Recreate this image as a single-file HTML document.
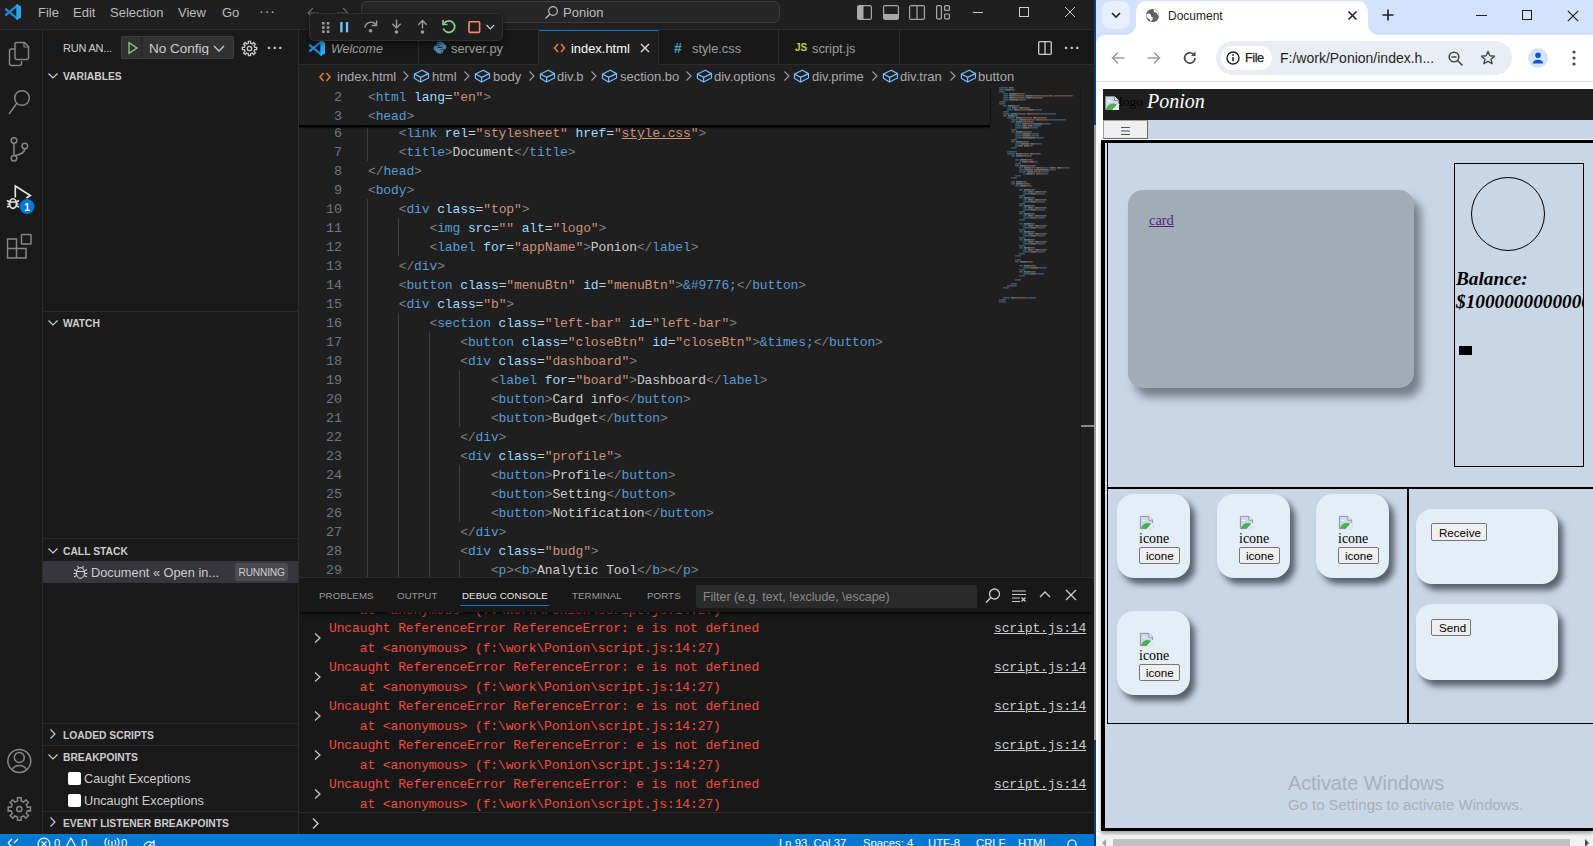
<!DOCTYPE html>
<html><head><meta charset="utf-8">
<style>
*{box-sizing:border-box;margin:0;padding:0}
html,body{width:1593px;height:846px;overflow:hidden;background:#1f1f1f;font-family:"Liberation Sans",sans-serif}
.a{position:absolute}
.t{position:absolute;white-space:pre;line-height:1}
.mono{font-family:"Liberation Mono",monospace}
#vs{position:absolute;left:0;top:0;width:1094px;height:846px;background:#1f1f1f;overflow:hidden}
#title{left:0;top:0;width:1094px;height:30px;background:#1f1f1f;border-bottom:1px solid #2b2b2b}
#act{left:0;top:30px;width:43px;height:804px;background:#1a1a1a;border-right:1px solid #2b2b2b}
#side{left:43px;top:30px;width:256px;height:804px;background:#1a1a1a;border-right:1px solid #2b2b2b}
#status{left:0;top:834px;width:1094px;height:12px;background:#0078d4}
.menu{color:#bbbbbb;font-size:13px;top:6px}
.sh{font-weight:bold;font-size:10.3px;color:#cccccc;margin-top:1px}
.sep{position:absolute;height:1px;background:#2b2b2b}
.code{font-family:"Liberation Mono",monospace;font-size:13px;letter-spacing:-0.12px;color:#cccccc;margin-top:1px}
.b{color:#808080}.tg{color:#569cd6}.at{color:#9cdcfe}.s{color:#ce9178}.w{color:#cccccc}
.ln{position:absolute;left:300px;width:42px;text-align:right;font-family:"Liberation Mono",monospace;font-size:13.4px;color:#6e7681;line-height:19px;margin-top:1px}
.cl{position:absolute;left:368px;white-space:pre;line-height:19px}
.ig{position:absolute;width:1px;background:#404040}
.bct{top:70px;font-size:13px;color:#a9a9a9}
.err{color:#f24b40}
.btn{background:#efefef;border:1px solid #767676;border-radius:2px;color:#000}
.stt{top:4px;font-size:11.3px;color:#ffffff}
.ptab{top:591px;font-size:9.7px;color:#9d9d9d;letter-spacing:0.1px}
#chrome{position:absolute;left:1096px;top:0;width:497px;height:846px;background:#fff;overflow:hidden}
</style></head><body>
<div id="vs">

 <div id="title" class="a">
  <svg class="a" style="left:5px;top:4px" width="16" height="16" viewBox="0 0 16 16"><path d="M1 5.3 12.3 14.6M1 10.9 12.3 1.4" stroke="#1b8ad8" stroke-width="2.3" stroke-linecap="square"/><path d="M11.3.2 16 2.3v11.4L11.3 15.8z" fill="#28a8f0"/></svg>
  <span class="t menu" style="left:38px">File</span>
  <span class="t menu" style="left:73px">Edit</span>
  <span class="t menu" style="left:110px">Selection</span>
  <span class="t menu" style="left:178px">View</span>
  <span class="t menu" style="left:222px">Go</span>
  <span class="t menu" style="left:259px;top:4px;font-size:14px;letter-spacing:1px">&middot;&middot;&middot;</span>
  <svg class="a" style="left:306px;top:5px" width="44" height="16"><path d="M2 8h11M2 8l5-5M2 8l5 5" stroke="#6a6a6a" stroke-width="1.2" fill="none"/><path d="M42 8H31M42 8l-5-5M42 8l-5 5" stroke="#6a6a6a" stroke-width="1.2" fill="none"/></svg>
  <div class="a" style="left:361px;top:1px;width:419px;height:22px;background:#262626;border:1px solid #3c3c3c;border-radius:6px"></div>
  <svg class="a" style="left:544px;top:5px" width="15" height="15"><circle cx="9" cy="6" r="4.3" stroke="#bdbdbd" stroke-width="1.2" fill="none"/><path d="M6 9 1.5 13.5" stroke="#bdbdbd" stroke-width="1.3"/></svg>
  <span class="t" style="left:563px;top:6px;font-size:13px;color:#bdbdbd">Ponion</span>
  <svg class="a" style="left:857px;top:5px" width="15" height="15"><rect x="0.6" y="0.6" width="13.8" height="13.8" rx="1.5" stroke="#a8a8a8" stroke-width="1.2" fill="none"/><rect x="1" y="1" width="5.5" height="13" fill="#a8a8a8"/></svg>
  <svg class="a" style="left:883px;top:5px" width="16" height="15"><rect x="0.6" y="0.6" width="14.8" height="13.8" rx="1.5" stroke="#a8a8a8" stroke-width="1.2" fill="none"/><rect x="1" y="9" width="14" height="5" fill="#a8a8a8"/></svg>
  <svg class="a" style="left:909px;top:5px" width="16" height="15"><rect x="0.6" y="0.6" width="14.8" height="13.8" rx="1.5" stroke="#a8a8a8" stroke-width="1.2" fill="none"/><path d="M8 1v13" stroke="#a8a8a8" stroke-width="1.2"/></svg>
  <svg class="a" style="left:936px;top:5px" width="15" height="15"><rect x="0.6" y="0.6" width="4.8" height="13.3" rx="1" stroke="#a8a8a8" stroke-width="1.2" fill="none"/><rect x="8.6" y="0.6" width="4.8" height="4.8" rx="1" stroke="#a8a8a8" stroke-width="1.2" fill="none"/><rect x="8.6" y="9" width="4.8" height="4.8" rx="1" stroke="#a8a8a8" stroke-width="1.2" fill="none"/></svg>
  <div class="a" style="left:973px;top:12px;width:10px;height:1px;background:#cccccc"></div>
  <div class="a" style="left:1019px;top:7px;width:10px;height:10px;border:1px solid #cccccc"></div>
  <svg class="a" style="left:1064px;top:6px" width="12" height="12"><path d="M1 1l10 10M11 1 1 11" stroke="#cccccc" stroke-width="1"/></svg>
 </div>
 <div class="a" style="z-index:10;left:309px;top:13px;width:194px;height:28px;background:#1f1f1f;border:1px solid #2f2f2f;border-radius:5px;box-shadow:0 2px 6px rgba(0,0,0,.6)">
  <svg class="a" style="left:-1px;top:-1px" width="194" height="28">
   <g fill="#9a9a9a"><rect x="13" y="9" width="2.6" height="2.6"/><rect x="17.8" y="9" width="2.6" height="2.6"/><rect x="13" y="13.2" width="2.6" height="2.6"/><rect x="17.8" y="13.2" width="2.6" height="2.6"/><rect x="13" y="17.4" width="2.6" height="2.6"/><rect x="17.8" y="17.4" width="2.6" height="2.6"/></g>
   <rect x="31.2" y="9" width="2.4" height="10.3" fill="#75beff"/><rect x="36.8" y="9" width="2.4" height="10.3" fill="#75beff"/>
   <path d="M56 14.8a6 6 0 0 1 11.2-2.6" stroke="#9a9a9a" stroke-width="1.4" fill="none"/><path d="M67.6 7.5v5h-5" stroke="#9a9a9a" stroke-width="1.4" fill="none"/><circle cx="61.5" cy="17.8" r="1.8" fill="#9a9a9a"/>
   <path d="M87.5 6.5v8.5M83.3 10.8l4.2 4.2 4.2-4.2" stroke="#9a9a9a" stroke-width="1.4" fill="none"/><circle cx="87.5" cy="19" r="1.8" fill="#9a9a9a"/>
   <path d="M113.5 15.5V7.5M109.3 11.7l4.2-4.2 4.2 4.2" stroke="#9a9a9a" stroke-width="1.4" fill="none"/><circle cx="113.5" cy="19" r="1.8" fill="#9a9a9a"/>
   <path d="M135 10.5a5.8 5.8 0 1 1-.6 5" stroke="#89d185" stroke-width="1.7" fill="none"/><path d="M134 7v4.5h4.5" stroke="#89d185" stroke-width="1.7" fill="none"/>
   <rect x="160" y="8.8" width="10.6" height="10.6" rx="0.8" stroke="#f48771" stroke-width="1.6" fill="none"/>
   <path d="M177.5 12l3.8 3.8 3.8-3.8" stroke="#cccccc" stroke-width="1.2" fill="none"/>
  </svg>
 </div>

 <div id="act" class="a"></div>
 <svg class="a" style="left:0;top:30px" width="42" height="804">
  <g stroke="#858585" stroke-width="1.5" fill="none">
   <path d="M15 19h-3.5a2 2 0 0 0-2 2v12.5a2 2 0 0 0 2 2h8a2 2 0 0 0 2-2V31"/>
   <path d="M16.5 12.5h8l4 4v11.5a1.5 1.5 0 0 1-1.5 1.5h-10.5a1.5 1.5 0 0 1-1.5-1.5V14a1.5 1.5 0 0 1 1.5-1.5z"/><path d="M24 12.5v4.5h4.5" stroke-width="1.2"/>
   <circle cx="22" cy="68" r="7.3"/><path d="M17 73 9 84"/>
   <circle cx="14" cy="110.5" r="2.8"/><circle cx="24.8" cy="116" r="2.8"/><circle cx="14" cy="128.3" r="2.8"/><path d="M14 113.3v12.2M24.8 118.8c0 4-4 5.5-10 7"/>
   <path d="M7.5 209h9v9.5h-9zM16.5 218.5h9.5v9.5h-9.5zM7.5 218.5h9v9.5h-9z"/><rect x="21.5" y="204.5" width="9.5" height="9.5" rx="0.5"/>
  </g>
  <g stroke="#e6e6e6" stroke-width="1.6" fill="none">
   <path d="M15.3 167.5v-11.5l15 9.5-4 2.5"/>
   <ellipse cx="13" cy="173.6" rx="3.4" ry="4.8"/><path d="M9.6 172h6.8M7 170.5l2.3 1.3M19 170.5l-2.3 1.3M7 177l2.5-1M19 177l-2.5-1M7.5 174h2M16.5 174h2"/>
  </g>
  <circle cx="27" cy="176.5" r="7.5" fill="#0078d4"/>
  <text x="27" y="180.5" font-family="Liberation Sans" font-size="10" font-weight="bold" fill="#fff" text-anchor="middle">1</text>
  <g stroke="#858585" stroke-width="1.5" fill="none">
   <circle cx="19.3" cy="731" r="11.5"/><circle cx="19.3" cy="727.5" r="5"/><path d="M12 740a8 7.5 0 0 1 14.6 0"/>
   <path d="M27.41 777.22L30.45 777.14L30.45 780.86L27.41 780.78L26.29 783.47L28.49 785.57L25.87 788.19L23.77 785.99L21.08 787.11L21.16 790.15L17.44 790.15L17.52 787.11L14.83 785.99L12.73 788.19L10.11 785.57L12.31 783.47L11.19 780.78L8.15 780.86L8.15 777.14L11.19 777.22L12.31 774.53L10.11 772.43L12.73 769.81L14.83 772.01L17.52 770.89L17.44 767.85L21.16 767.85L21.08 770.89L23.77 772.01L25.87 769.81L28.49 772.43L26.29 774.53z" stroke-width="1.5"/><circle cx="19.3" cy="779" r="2.6"/>
  </g>
 </svg>

 <div id="side" class="a"></div>
 <span class="t" style="left:63px;top:43px;font-size:11px;color:#cccccc;letter-spacing:-0.2px">RUN AN...</span>
 <div class="a" style="left:121px;top:36px;width:113px;height:23px;background:#313131;border:1px solid #3c3c3c;border-radius:1px"></div>
 <div class="a" style="left:141px;top:37px;width:1px;height:21px;background:#232323"></div>
 <svg class="a" style="left:126px;top:40px" width="14" height="16"><path d="M3 2.8v10.4L11 8z" stroke="#89d185" stroke-width="1.3" fill="none"/></svg>
 <span class="t" style="left:149px;top:41.5px;font-size:13.5px;color:#cccccc;width:60px;overflow:hidden">No Configu</span>
 <svg class="a" style="left:212px;top:41px" width="14" height="14"><path d="M2 5l5 5 5-5" stroke="#cccccc" stroke-width="1.3" fill="none"/></svg>
 <svg class="a" style="left:241px;top:40px" width="17" height="17"><g stroke="#cccccc" stroke-width="1.3" fill="none"><path d="M13.68 7.36L15.70 7.30L15.70 9.70L13.68 9.64L12.96 11.36L14.44 12.74L12.74 14.44L11.36 12.96L9.64 13.68L9.70 15.70L7.30 15.70L7.36 13.68L5.64 12.96L4.26 14.44L2.56 12.74L4.04 11.36L3.32 9.64L1.30 9.70L1.30 7.30L3.32 7.36L4.04 5.64L2.56 4.26L4.26 2.56L5.64 4.04L7.36 3.32L7.30 1.30L9.70 1.30L9.64 3.32L11.36 4.04L12.74 2.56L14.44 4.26L12.96 5.64z"/><circle cx="8.5" cy="8.5" r="2.2"/></g></svg>
 <span class="t" style="left:267px;top:41px;font-size:14px;color:#cccccc;letter-spacing:1px;font-weight:bold">&middot;&middot;&middot;</span>
 <svg class="a" style="left:47px;top:70px" width="12" height="12"><path d="M1.5 3.5l4.5 4.5 4.5-4.5" stroke="#cccccc" stroke-width="1.2" fill="none"/></svg>
 <span class="t sh" style="left:63px;top:71px">VARIABLES</span>
 <div class="sep" style="left:43px;top:311px;width:255px"></div>
 <svg class="a" style="left:47px;top:317px" width="12" height="12"><path d="M1.5 3.5l4.5 4.5 4.5-4.5" stroke="#cccccc" stroke-width="1.2" fill="none"/></svg>
 <span class="t sh" style="left:63px;top:318px">WATCH</span>
 <div class="sep" style="left:43px;top:538px;width:255px"></div>
 <svg class="a" style="left:47px;top:545px" width="12" height="12"><path d="M1.5 3.5l4.5 4.5 4.5-4.5" stroke="#cccccc" stroke-width="1.2" fill="none"/></svg>
 <span class="t sh" style="left:63px;top:546px">CALL STACK</span>
 <div class="a" style="left:43px;top:561px;width:255px;height:22px;background:#36363c"></div>
 <svg class="a" style="left:72px;top:564px" width="17" height="16"><g stroke="#cccccc" stroke-width="1.2" fill="none"><ellipse cx="8.5" cy="9" rx="4" ry="5.3"/><path d="M4.5 7.5h8M2 5.5l2.5 1.5M15 5.5l-2.5 1.5M2 13l2.6-1.5M15 13l-2.6-1.5M1.5 9.5h3M12.5 9.5h3M6.5 3.8l-1-1.8M10.5 3.8l1-1.8"/></g></svg>
 <span class="t" style="left:91px;top:567px;font-size:12.8px;color:#cccccc">Document « Open in...</span>
 <div class="a" style="left:235px;top:563px;width:53px;height:18px;background:#4a4a51;border-radius:3px"></div>
 <span class="t" style="left:238.5px;top:568px;font-size:10.2px;color:#cccccc;letter-spacing:-0.2px">RUNNING</span>
 <div class="sep" style="left:43px;top:723px;width:255px"></div>
 <svg class="a" style="left:47px;top:728px" width="12" height="12"><path d="M3.5 1.5l4.5 4.5-4.5 4.5" stroke="#cccccc" stroke-width="1.2" fill="none"/></svg>
 <span class="t sh" style="left:63px;top:730px">LOADED SCRIPTS</span>
 <div class="sep" style="left:43px;top:745px;width:255px"></div>
 <svg class="a" style="left:47px;top:751px" width="12" height="12"><path d="M1.5 3.5l4.5 4.5 4.5-4.5" stroke="#cccccc" stroke-width="1.2" fill="none"/></svg>
 <span class="t sh" style="left:63px;top:752px">BREAKPOINTS</span>
 <div class="a" style="left:68px;top:772px;width:13px;height:13px;background:#ffffff;border-radius:2px"></div>
 <span class="t" style="left:84px;top:773px;font-size:12.7px;color:#cccccc">Caught Exceptions</span>
 <div class="a" style="left:68px;top:794px;width:13px;height:13px;background:#ffffff;border-radius:2px"></div>
 <span class="t" style="left:84px;top:795px;font-size:12.7px;color:#cccccc">Uncaught Exceptions</span>
 <div class="sep" style="left:43px;top:811px;width:255px"></div>
 <svg class="a" style="left:47px;top:816px" width="12" height="12"><path d="M3.5 1.5l4.5 4.5-4.5 4.5" stroke="#cccccc" stroke-width="1.2" fill="none"/></svg>
 <span class="t sh" style="left:63px;top:818px">EVENT LISTENER BREAKPOINTS</span>

 <div id="tabs" class="a" style="left:299px;top:30px;width:795px;height:35px;background:#181818;border-bottom:1px solid #2b2b2b"></div>
 <div class="a" style="left:299px;top:30px;width:120px;height:34px;border-right:1px solid #2b2b2b"></div>
 <div class="a" style="left:419px;top:30px;width:120px;height:34px;border-right:1px solid #2b2b2b"></div>
 <div class="a" style="left:539px;top:30px;width:120px;height:35px;background:#1f1f1f;border-top:1px solid #0078d4;border-right:1px solid #2b2b2b"></div>
 <div class="a" style="left:659px;top:30px;width:120px;height:34px;border-right:1px solid #2b2b2b"></div>
 <div class="a" style="left:779px;top:30px;width:121px;height:34px;border-right:1px solid #2b2b2b"></div>
 <svg class="a" style="left:309px;top:40px" width="16" height="16" viewBox="0 0 16 16"><path d="M1 5.3 12.3 14.6M1 10.9 12.3 1.4" stroke="#1b8ad8" stroke-width="2.3" stroke-linecap="square"/><path d="M11.3.2 16 2.3v11.4L11.3 15.8z" fill="#28a8f0"/></svg>
 <span class="t" style="left:331px;top:43px;font-size:12.5px;font-style:italic;color:#9d9d9d">Welcome</span>
 <svg class="a" style="left:433px;top:40px" width="14" height="15" viewBox="0 0 16 16"><path fill="#3f7fb5" d="M7.8 1C5 1 4.3 2.1 4.3 3.6v1.6h3.6v.6H3C1.6 5.8.8 7 .8 8.8c0 1.9.9 3 2.3 3h1.3v-1.8c0-1.4 1.1-2.5 2.5-2.5h3.5c1.2 0 2.1-.9 2.1-2.1V3.6C12.5 2.2 11.2 1 7.8 1zM6 2.3c.4 0 .7.3.7.7s-.3.7-.7.7-.7-.3-.7-.7.3-.7.7-.7z"/><path fill="#6aa7d8" d="M8.2 15c2.8 0 3.5-1.1 3.5-2.6v-1.6H8.1v-.6H13c1.4 0 2.2-1.2 2.2-3 0-1.9-.9-3-2.3-3h-1.3V6c0 1.4-1.1 2.5-2.5 2.5H5.6c-1.2 0-2.1.9-2.1 2.1v1.8c0 1.4 1.3 2.6 4.7 2.6zM10 13.7c-.4 0-.7-.3-.7-.7s.3-.7.7-.7.7.3.7.7-.3.7-.7.7z" opacity=".75"/></svg>
 <span class="t" style="left:451px;top:43px;font-size:12.8px;color:#9d9d9d">server.py</span>
 <svg class="a" style="left:553px;top:42px" width="13" height="12"><path d="M5 2 1.5 6 5 10M8 2l3.5 4L8 10" stroke="#e37933" stroke-width="1.6" fill="none"/></svg>
 <span class="t" style="left:571px;top:43px;font-size:12.9px;color:#ffffff">index.html</span>
 <svg class="a" style="left:640px;top:43px" width="10" height="10"><path d="M1 1l8 8M9 1 1 9" stroke="#e0e0e0" stroke-width="1.3"/></svg>
 <span class="t" style="left:674px;top:41px;font-size:14px;font-weight:bold;color:#519aba">#</span>
 <span class="t" style="left:692px;top:43px;font-size:12.8px;color:#9d9d9d">style.css</span>
 <span class="t" style="left:795px;top:43px;font-size:10px;font-weight:bold;color:#cbcb41">JS</span>
 <span class="t" style="left:812px;top:43px;font-size:12.8px;color:#9d9d9d">script.js</span>
 <svg class="a" style="left:1038px;top:41px" width="15" height="14"><rect x="0.7" y="0.7" width="12.6" height="12.6" rx="1" stroke="#cccccc" stroke-width="1.3" fill="none"/><path d="M7 1v12" stroke="#cccccc" stroke-width="1.3"/></svg>
 <span class="t" style="left:1064px;top:41px;font-size:14px;color:#cccccc;letter-spacing:1px;font-weight:bold">&middot;&middot;&middot;</span>
 <svg class="a" style="left:319px;top:71px" width="13" height="12"><path d="M4.5 2 1 6l3.5 4M7.5 2 11 6l-3.5 4" stroke="#e37933" stroke-width="1.5" fill="none"/></svg>
 <span class="t bct" style="left:337px">index.html</span>
 <svg class="a" style="left:402px;top:70px" width="8" height="12"><path d="M1.5 1.5l4.5 4.5-4.5 4.5" stroke="#a0a0a0" stroke-width="1.1" fill="none"/></svg><svg class="a" style="left:413px;top:69px" width="17" height="15"><g stroke="#75beff" stroke-width="1.2" fill="none" stroke-linejoin="round"><path d="M9.3 1.2 1.4 5v4.2l6.1 3.8 8-4V4.6z"/><path d="M1.4 5l6.3 3.4 7.8-3.8M7.6 8.4v4.6"/></g></svg><span class="t bct" style="left:432px">html</span><svg class="a" style="left:463px;top:70px" width="8" height="12"><path d="M1.5 1.5l4.5 4.5-4.5 4.5" stroke="#a0a0a0" stroke-width="1.1" fill="none"/></svg><svg class="a" style="left:474px;top:69px" width="17" height="15"><g stroke="#75beff" stroke-width="1.2" fill="none" stroke-linejoin="round"><path d="M9.3 1.2 1.4 5v4.2l6.1 3.8 8-4V4.6z"/><path d="M1.4 5l6.3 3.4 7.8-3.8M7.6 8.4v4.6"/></g></svg><span class="t bct" style="left:493px">body</span><svg class="a" style="left:528px;top:70px" width="8" height="12"><path d="M1.5 1.5l4.5 4.5-4.5 4.5" stroke="#a0a0a0" stroke-width="1.1" fill="none"/></svg><svg class="a" style="left:539px;top:69px" width="17" height="15"><g stroke="#75beff" stroke-width="1.2" fill="none" stroke-linejoin="round"><path d="M9.3 1.2 1.4 5v4.2l6.1 3.8 8-4V4.6z"/><path d="M1.4 5l6.3 3.4 7.8-3.8M7.6 8.4v4.6"/></g></svg><span class="t bct" style="left:557px">div.b</span><svg class="a" style="left:590px;top:70px" width="8" height="12"><path d="M1.5 1.5l4.5 4.5-4.5 4.5" stroke="#a0a0a0" stroke-width="1.1" fill="none"/></svg><svg class="a" style="left:601px;top:69px" width="17" height="15"><g stroke="#75beff" stroke-width="1.2" fill="none" stroke-linejoin="round"><path d="M9.3 1.2 1.4 5v4.2l6.1 3.8 8-4V4.6z"/><path d="M1.4 5l6.3 3.4 7.8-3.8M7.6 8.4v4.6"/></g></svg><span class="t bct" style="left:620px">section.bo</span><svg class="a" style="left:685px;top:70px" width="8" height="12"><path d="M1.5 1.5l4.5 4.5-4.5 4.5" stroke="#a0a0a0" stroke-width="1.1" fill="none"/></svg><svg class="a" style="left:696px;top:69px" width="17" height="15"><g stroke="#75beff" stroke-width="1.2" fill="none" stroke-linejoin="round"><path d="M9.3 1.2 1.4 5v4.2l6.1 3.8 8-4V4.6z"/><path d="M1.4 5l6.3 3.4 7.8-3.8M7.6 8.4v4.6"/></g></svg><span class="t bct" style="left:714px">div.options</span><svg class="a" style="left:783px;top:70px" width="8" height="12"><path d="M1.5 1.5l4.5 4.5-4.5 4.5" stroke="#a0a0a0" stroke-width="1.1" fill="none"/></svg><svg class="a" style="left:793px;top:69px" width="17" height="15"><g stroke="#75beff" stroke-width="1.2" fill="none" stroke-linejoin="round"><path d="M9.3 1.2 1.4 5v4.2l6.1 3.8 8-4V4.6z"/><path d="M1.4 5l6.3 3.4 7.8-3.8M7.6 8.4v4.6"/></g></svg><span class="t bct" style="left:812px">div.prime</span><svg class="a" style="left:871px;top:70px" width="8" height="12"><path d="M1.5 1.5l4.5 4.5-4.5 4.5" stroke="#a0a0a0" stroke-width="1.1" fill="none"/></svg><svg class="a" style="left:882px;top:69px" width="17" height="15"><g stroke="#75beff" stroke-width="1.2" fill="none" stroke-linejoin="round"><path d="M9.3 1.2 1.4 5v4.2l6.1 3.8 8-4V4.6z"/><path d="M1.4 5l6.3 3.4 7.8-3.8M7.6 8.4v4.6"/></g></svg><span class="t bct" style="left:900px">div.tran</span><svg class="a" style="left:949px;top:70px" width="8" height="12"><path d="M1.5 1.5l4.5 4.5-4.5 4.5" stroke="#a0a0a0" stroke-width="1.1" fill="none"/></svg><svg class="a" style="left:960px;top:69px" width="17" height="15"><g stroke="#75beff" stroke-width="1.2" fill="none" stroke-linejoin="round"><path d="M9.3 1.2 1.4 5v4.2l6.1 3.8 8-4V4.6z"/><path d="M1.4 5l6.3 3.4 7.8-3.8M7.6 8.4v4.6"/></g></svg><span class="t bct" style="left:978px">button</span>
 <!--CODE--><div class="a" style="left:299px;top:87px;width:795px;height:490px;overflow:hidden"><div class="a" style="left:-299px;top:-87px;width:1094px;height:846px"><div class="ig" style="left:367px;top:123px;height:38px;background:#404040"></div><div class="ig" style="left:367px;top:199px;height:380px;background:#404040"></div><div class="ig" style="left:398px;top:218px;height:38px;background:#404040"></div><div class="ig" style="left:398px;top:313px;height:266px;background:#404040"></div><div class="ig" style="left:429px;top:332px;height:247px;background:#404040"></div><div class="ig" style="left:459px;top:370px;height:57px;background:#404040"></div><div class="ig" style="left:459px;top:465px;height:57px;background:#404040"></div><div class="ig" style="left:459px;top:560px;height:19px;background:#404040"></div><div class="ln" style="top:123px">6</div><div class="cl code" style="top:123px">    <span class="b">&lt;</span><span class="tg">link</span> <span class="at">rel</span>=<span class="s">&quot;stylesheet&quot;</span> <span class="at">href</span>=<span class="s">&quot;</span><span class="s" style="text-decoration:underline">style.css</span><span class="s">&quot;</span><span class="b">&gt;</span></div><div class="ln" style="top:142px">7</div><div class="cl code" style="top:142px">    <span class="b">&lt;</span><span class="tg">title</span><span class="b">&gt;</span>Document<span class="b">&lt;/</span><span class="tg">title</span><span class="b">&gt;</span></div><div class="ln" style="top:161px">8</div><div class="cl code" style="top:161px"><span class="b">&lt;/</span><span class="tg">head</span><span class="b">&gt;</span></div><div class="ln" style="top:180px">9</div><div class="cl code" style="top:180px"><span class="b">&lt;</span><span class="tg">body</span><span class="b">&gt;</span></div><div class="ln" style="top:199px">10</div><div class="cl code" style="top:199px">    <span class="b">&lt;</span><span class="tg">div</span> <span class="at">class</span>=<span class="s">&quot;top&quot;</span><span class="b">&gt;</span></div><div class="ln" style="top:218px">11</div><div class="cl code" style="top:218px">        <span class="b">&lt;</span><span class="tg">img</span> <span class="at">src</span>=<span class="s">&quot;&quot;</span> <span class="at">alt</span>=<span class="s">&quot;logo&quot;</span><span class="b">&gt;</span></div><div class="ln" style="top:237px">12</div><div class="cl code" style="top:237px">        <span class="b">&lt;</span><span class="tg">label</span> <span class="at">for</span>=<span class="s">&quot;appName&quot;</span><span class="b">&gt;</span>Ponion<span class="b">&lt;/</span><span class="tg">label</span><span class="b">&gt;</span></div><div class="ln" style="top:256px">13</div><div class="cl code" style="top:256px">    <span class="b">&lt;/</span><span class="tg">div</span><span class="b">&gt;</span></div><div class="ln" style="top:275px">14</div><div class="cl code" style="top:275px">    <span class="b">&lt;</span><span class="tg">button</span> <span class="at">class</span>=<span class="s">&quot;menuBtn&quot;</span> <span class="at">id</span>=<span class="s">&quot;menuBtn&quot;</span><span class="b">&gt;</span><span class="tg">&amp;#9776;</span><span class="b">&lt;/</span><span class="tg">button</span><span class="b">&gt;</span></div><div class="ln" style="top:294px">15</div><div class="cl code" style="top:294px">    <span class="b">&lt;</span><span class="tg">div</span> <span class="at">class</span>=<span class="s">&quot;b&quot;</span><span class="b">&gt;</span></div><div class="ln" style="top:313px">16</div><div class="cl code" style="top:313px">        <span class="b">&lt;</span><span class="tg">section</span> <span class="at">class</span>=<span class="s">&quot;left-bar&quot;</span> <span class="at">id</span>=<span class="s">&quot;left-bar&quot;</span><span class="b">&gt;</span></div><div class="ln" style="top:332px">17</div><div class="cl code" style="top:332px">            <span class="b">&lt;</span><span class="tg">button</span> <span class="at">class</span>=<span class="s">&quot;closeBtn&quot;</span> <span class="at">id</span>=<span class="s">&quot;closeBtn&quot;</span><span class="b">&gt;</span><span class="tg">&amp;times;</span><span class="b">&lt;/</span><span class="tg">button</span><span class="b">&gt;</span></div><div class="ln" style="top:351px">18</div><div class="cl code" style="top:351px">            <span class="b">&lt;</span><span class="tg">div</span> <span class="at">class</span>=<span class="s">&quot;dashboard&quot;</span><span class="b">&gt;</span></div><div class="ln" style="top:370px">19</div><div class="cl code" style="top:370px">                <span class="b">&lt;</span><span class="tg">label</span> <span class="at">for</span>=<span class="s">&quot;board&quot;</span><span class="b">&gt;</span>Dashboard<span class="b">&lt;/</span><span class="tg">label</span><span class="b">&gt;</span></div><div class="ln" style="top:389px">20</div><div class="cl code" style="top:389px">                <span class="b">&lt;</span><span class="tg">button</span><span class="b">&gt;</span>Card info<span class="b">&lt;/</span><span class="tg">button</span><span class="b">&gt;</span></div><div class="ln" style="top:408px">21</div><div class="cl code" style="top:408px">                <span class="b">&lt;</span><span class="tg">button</span><span class="b">&gt;</span>Budget<span class="b">&lt;/</span><span class="tg">button</span><span class="b">&gt;</span></div><div class="ln" style="top:427px">22</div><div class="cl code" style="top:427px">            <span class="b">&lt;/</span><span class="tg">div</span><span class="b">&gt;</span></div><div class="ln" style="top:446px">23</div><div class="cl code" style="top:446px">            <span class="b">&lt;</span><span class="tg">div</span> <span class="at">class</span>=<span class="s">&quot;profile&quot;</span><span class="b">&gt;</span></div><div class="ln" style="top:465px">24</div><div class="cl code" style="top:465px">                <span class="b">&lt;</span><span class="tg">button</span><span class="b">&gt;</span>Profile<span class="b">&lt;/</span><span class="tg">button</span><span class="b">&gt;</span></div><div class="ln" style="top:484px">25</div><div class="cl code" style="top:484px">                <span class="b">&lt;</span><span class="tg">button</span><span class="b">&gt;</span>Setting<span class="b">&lt;/</span><span class="tg">button</span><span class="b">&gt;</span></div><div class="ln" style="top:503px">26</div><div class="cl code" style="top:503px">                <span class="b">&lt;</span><span class="tg">button</span><span class="b">&gt;</span>Notification<span class="b">&lt;/</span><span class="tg">button</span><span class="b">&gt;</span></div><div class="ln" style="top:522px">27</div><div class="cl code" style="top:522px">            <span class="b">&lt;/</span><span class="tg">div</span><span class="b">&gt;</span></div><div class="ln" style="top:541px">28</div><div class="cl code" style="top:541px">            <span class="b">&lt;</span><span class="tg">div</span> <span class="at">class</span>=<span class="s">&quot;budg&quot;</span><span class="b">&gt;</span></div><div class="ln" style="top:560px">29</div><div class="cl code" style="top:560px">                <span class="b">&lt;</span><span class="tg">p</span><span class="b">&gt;</span><span class="b">&lt;</span><span class="tg">b</span><span class="b">&gt;</span>Analytic Tool<span class="b">&lt;/</span><span class="tg">b</span><span class="b">&gt;</span><span class="b">&lt;/</span><span class="tg">p</span><span class="b">&gt;</span></div></div></div><div class="a" style="left:299px;top:87px;width:691px;height:38px;background:#1f1f1f"></div><div class="a" style="left:299px;top:125px;width:691px;height:2px;background:#000"></div><div class="a" style="left:299px;top:127px;width:691px;height:2px;background:linear-gradient(#000a,#0000)"></div><div class="a" style="left:299px;top:87px;width:690px;height:38px;"><div class="a" style="left:-299px;top:-87px;width:1094px;height:100px"><div class="ln" style="top:87px">2</div><div class="cl code" style="top:87px"><span class="b">&lt;</span><span class="tg">html</span> <span class="at">lang</span>=<span class="s">&quot;en&quot;</span><span class="b">&gt;</span></div><div class="ln" style="top:106px">3</div><div class="cl code" style="top:106px"><span class="b">&lt;</span><span class="tg">head</span><span class="b">&gt;</span></div></div></div><!--/CODE--><!--MM--><svg class="a" style="left:999px;top:87px;opacity:.42" width="85" height="216"><rect x="0" y="0" width="2" height="1.6" fill="#808080"/><rect x="2" y="0" width="7" height="1.6" fill="#569cd6"/><rect x="10" y="0" width="4" height="1.6" fill="#9cdcfe"/><rect x="14" y="0" width="1" height="1.6" fill="#808080"/><rect x="0" y="2" width="1" height="1.6" fill="#808080"/><rect x="1" y="2" width="4" height="1.6" fill="#569cd6"/><rect x="6" y="2" width="4" height="1.6" fill="#9cdcfe"/><rect x="10" y="2" width="1" height="1.6" fill="#cccccc"/><rect x="11" y="2" width="4" height="1.6" fill="#ce9178"/><rect x="15" y="2" width="1" height="1.6" fill="#808080"/><rect x="0" y="4" width="1" height="1.6" fill="#808080"/><rect x="1" y="4" width="4" height="1.6" fill="#569cd6"/><rect x="5" y="4" width="1" height="1.6" fill="#808080"/><rect x="4" y="6" width="1" height="1.6" fill="#808080"/><rect x="5" y="6" width="4" height="1.6" fill="#569cd6"/><rect x="10" y="6" width="7" height="1.6" fill="#9cdcfe"/><rect x="17" y="6" width="1" height="1.6" fill="#cccccc"/><rect x="18" y="6" width="7" height="1.6" fill="#ce9178"/><rect x="25" y="6" width="1" height="1.6" fill="#808080"/><rect x="4" y="8" width="1" height="1.6" fill="#808080"/><rect x="5" y="8" width="4" height="1.6" fill="#569cd6"/><rect x="10" y="8" width="4" height="1.6" fill="#9cdcfe"/><rect x="14" y="8" width="1" height="1.6" fill="#cccccc"/><rect x="15" y="8" width="10" height="1.6" fill="#ce9178"/><rect x="26" y="8" width="7" height="1.6" fill="#9cdcfe"/><rect x="33" y="8" width="1" height="1.6" fill="#cccccc"/><rect x="34" y="8" width="20" height="1.6" fill="#ce9178"/><rect x="55" y="8" width="18" height="1.6" fill="#ce9178"/><rect x="73" y="8" width="1" height="1.6" fill="#808080"/><rect x="4" y="10" width="1" height="1.6" fill="#808080"/><rect x="5" y="10" width="4" height="1.6" fill="#569cd6"/><rect x="10" y="10" width="3" height="1.6" fill="#9cdcfe"/><rect x="13" y="10" width="1" height="1.6" fill="#cccccc"/><rect x="14" y="10" width="12" height="1.6" fill="#ce9178"/><rect x="27" y="10" width="4" height="1.6" fill="#9cdcfe"/><rect x="31" y="10" width="1" height="1.6" fill="#cccccc"/><rect x="32" y="10" width="1" height="1.6" fill="#ce9178"/><rect x="33" y="10" width="9" height="1.6" fill="#ce9178"/><rect x="42" y="10" width="1" height="1.6" fill="#ce9178"/><rect x="43" y="10" width="1" height="1.6" fill="#808080"/><rect x="4" y="12" width="1" height="1.6" fill="#808080"/><rect x="5" y="12" width="5" height="1.6" fill="#569cd6"/><rect x="10" y="12" width="1" height="1.6" fill="#808080"/><rect x="11" y="12" width="8" height="1.6" fill="#cccccc"/><rect x="19" y="12" width="2" height="1.6" fill="#808080"/><rect x="21" y="12" width="5" height="1.6" fill="#569cd6"/><rect x="26" y="12" width="1" height="1.6" fill="#808080"/><rect x="0" y="14" width="2" height="1.6" fill="#808080"/><rect x="2" y="14" width="4" height="1.6" fill="#569cd6"/><rect x="6" y="14" width="1" height="1.6" fill="#808080"/><rect x="0" y="16" width="1" height="1.6" fill="#808080"/><rect x="1" y="16" width="4" height="1.6" fill="#569cd6"/><rect x="5" y="16" width="1" height="1.6" fill="#808080"/><rect x="4" y="18" width="1" height="1.6" fill="#808080"/><rect x="5" y="18" width="3" height="1.6" fill="#569cd6"/><rect x="9" y="18" width="5" height="1.6" fill="#9cdcfe"/><rect x="14" y="18" width="1" height="1.6" fill="#cccccc"/><rect x="15" y="18" width="5" height="1.6" fill="#ce9178"/><rect x="20" y="18" width="1" height="1.6" fill="#808080"/><rect x="8" y="20" width="1" height="1.6" fill="#808080"/><rect x="9" y="20" width="3" height="1.6" fill="#569cd6"/><rect x="13" y="20" width="3" height="1.6" fill="#9cdcfe"/><rect x="16" y="20" width="1" height="1.6" fill="#cccccc"/><rect x="17" y="20" width="2" height="1.6" fill="#ce9178"/><rect x="20" y="20" width="3" height="1.6" fill="#9cdcfe"/><rect x="23" y="20" width="1" height="1.6" fill="#cccccc"/><rect x="24" y="20" width="6" height="1.6" fill="#ce9178"/><rect x="30" y="20" width="1" height="1.6" fill="#808080"/><rect x="8" y="22" width="1" height="1.6" fill="#808080"/><rect x="9" y="22" width="5" height="1.6" fill="#569cd6"/><rect x="15" y="22" width="3" height="1.6" fill="#9cdcfe"/><rect x="18" y="22" width="1" height="1.6" fill="#cccccc"/><rect x="19" y="22" width="9" height="1.6" fill="#ce9178"/><rect x="28" y="22" width="1" height="1.6" fill="#808080"/><rect x="29" y="22" width="6" height="1.6" fill="#cccccc"/><rect x="35" y="22" width="2" height="1.6" fill="#808080"/><rect x="37" y="22" width="5" height="1.6" fill="#569cd6"/><rect x="42" y="22" width="1" height="1.6" fill="#808080"/><rect x="4" y="24" width="2" height="1.6" fill="#808080"/><rect x="6" y="24" width="3" height="1.6" fill="#569cd6"/><rect x="9" y="24" width="1" height="1.6" fill="#808080"/><rect x="4" y="26" width="1" height="1.6" fill="#808080"/><rect x="5" y="26" width="6" height="1.6" fill="#569cd6"/><rect x="12" y="26" width="5" height="1.6" fill="#9cdcfe"/><rect x="17" y="26" width="1" height="1.6" fill="#cccccc"/><rect x="18" y="26" width="9" height="1.6" fill="#ce9178"/><rect x="28" y="26" width="2" height="1.6" fill="#9cdcfe"/><rect x="30" y="26" width="1" height="1.6" fill="#cccccc"/><rect x="31" y="26" width="9" height="1.6" fill="#ce9178"/><rect x="40" y="26" width="1" height="1.6" fill="#808080"/><rect x="41" y="26" width="7" height="1.6" fill="#569cd6"/><rect x="48" y="26" width="2" height="1.6" fill="#808080"/><rect x="50" y="26" width="6" height="1.6" fill="#569cd6"/><rect x="56" y="26" width="1" height="1.6" fill="#808080"/><rect x="4" y="28" width="1" height="1.6" fill="#808080"/><rect x="5" y="28" width="3" height="1.6" fill="#569cd6"/><rect x="9" y="28" width="5" height="1.6" fill="#9cdcfe"/><rect x="14" y="28" width="1" height="1.6" fill="#cccccc"/><rect x="15" y="28" width="3" height="1.6" fill="#ce9178"/><rect x="18" y="28" width="1" height="1.6" fill="#808080"/><rect x="8" y="30" width="1" height="1.6" fill="#808080"/><rect x="9" y="30" width="7" height="1.6" fill="#569cd6"/><rect x="17" y="30" width="5" height="1.6" fill="#9cdcfe"/><rect x="22" y="30" width="1" height="1.6" fill="#cccccc"/><rect x="23" y="30" width="10" height="1.6" fill="#ce9178"/><rect x="34" y="30" width="2" height="1.6" fill="#9cdcfe"/><rect x="36" y="30" width="1" height="1.6" fill="#cccccc"/><rect x="37" y="30" width="10" height="1.6" fill="#ce9178"/><rect x="47" y="30" width="1" height="1.6" fill="#808080"/><rect x="12" y="32" width="1" height="1.6" fill="#808080"/><rect x="13" y="32" width="6" height="1.6" fill="#569cd6"/><rect x="20" y="32" width="5" height="1.6" fill="#9cdcfe"/><rect x="25" y="32" width="1" height="1.6" fill="#cccccc"/><rect x="26" y="32" width="10" height="1.6" fill="#ce9178"/><rect x="37" y="32" width="2" height="1.6" fill="#9cdcfe"/><rect x="39" y="32" width="1" height="1.6" fill="#cccccc"/><rect x="40" y="32" width="10" height="1.6" fill="#ce9178"/><rect x="50" y="32" width="1" height="1.6" fill="#808080"/><rect x="51" y="32" width="7" height="1.6" fill="#569cd6"/><rect x="58" y="32" width="2" height="1.6" fill="#808080"/><rect x="60" y="32" width="6" height="1.6" fill="#569cd6"/><rect x="66" y="32" width="1" height="1.6" fill="#808080"/><rect x="12" y="34" width="1" height="1.6" fill="#808080"/><rect x="13" y="34" width="3" height="1.6" fill="#569cd6"/><rect x="17" y="34" width="5" height="1.6" fill="#9cdcfe"/><rect x="22" y="34" width="1" height="1.6" fill="#cccccc"/><rect x="23" y="34" width="11" height="1.6" fill="#ce9178"/><rect x="34" y="34" width="1" height="1.6" fill="#808080"/><rect x="16" y="36" width="1" height="1.6" fill="#808080"/><rect x="17" y="36" width="5" height="1.6" fill="#569cd6"/><rect x="23" y="36" width="3" height="1.6" fill="#9cdcfe"/><rect x="26" y="36" width="1" height="1.6" fill="#cccccc"/><rect x="27" y="36" width="7" height="1.6" fill="#ce9178"/><rect x="34" y="36" width="1" height="1.6" fill="#808080"/><rect x="35" y="36" width="9" height="1.6" fill="#cccccc"/><rect x="44" y="36" width="2" height="1.6" fill="#808080"/><rect x="46" y="36" width="5" height="1.6" fill="#569cd6"/><rect x="51" y="36" width="1" height="1.6" fill="#808080"/><rect x="16" y="38" width="1" height="1.6" fill="#808080"/><rect x="17" y="38" width="6" height="1.6" fill="#569cd6"/><rect x="23" y="38" width="1" height="1.6" fill="#808080"/><rect x="24" y="38" width="4" height="1.6" fill="#cccccc"/><rect x="29" y="38" width="4" height="1.6" fill="#cccccc"/><rect x="33" y="38" width="2" height="1.6" fill="#808080"/><rect x="35" y="38" width="6" height="1.6" fill="#569cd6"/><rect x="41" y="38" width="1" height="1.6" fill="#808080"/><rect x="16" y="40" width="1" height="1.6" fill="#808080"/><rect x="17" y="40" width="6" height="1.6" fill="#569cd6"/><rect x="23" y="40" width="1" height="1.6" fill="#808080"/><rect x="24" y="40" width="6" height="1.6" fill="#cccccc"/><rect x="30" y="40" width="2" height="1.6" fill="#808080"/><rect x="32" y="40" width="6" height="1.6" fill="#569cd6"/><rect x="38" y="40" width="1" height="1.6" fill="#808080"/><rect x="12" y="42" width="2" height="1.6" fill="#808080"/><rect x="14" y="42" width="3" height="1.6" fill="#569cd6"/><rect x="17" y="42" width="1" height="1.6" fill="#808080"/><rect x="12" y="44" width="1" height="1.6" fill="#808080"/><rect x="13" y="44" width="3" height="1.6" fill="#569cd6"/><rect x="17" y="44" width="5" height="1.6" fill="#9cdcfe"/><rect x="22" y="44" width="1" height="1.6" fill="#cccccc"/><rect x="23" y="44" width="9" height="1.6" fill="#ce9178"/><rect x="32" y="44" width="1" height="1.6" fill="#808080"/><rect x="16" y="46" width="1" height="1.6" fill="#808080"/><rect x="17" y="46" width="6" height="1.6" fill="#569cd6"/><rect x="23" y="46" width="1" height="1.6" fill="#808080"/><rect x="24" y="46" width="7" height="1.6" fill="#cccccc"/><rect x="31" y="46" width="2" height="1.6" fill="#808080"/><rect x="33" y="46" width="6" height="1.6" fill="#569cd6"/><rect x="39" y="46" width="1" height="1.6" fill="#808080"/><rect x="16" y="48" width="1" height="1.6" fill="#808080"/><rect x="17" y="48" width="6" height="1.6" fill="#569cd6"/><rect x="23" y="48" width="1" height="1.6" fill="#808080"/><rect x="24" y="48" width="7" height="1.6" fill="#cccccc"/><rect x="31" y="48" width="2" height="1.6" fill="#808080"/><rect x="33" y="48" width="6" height="1.6" fill="#569cd6"/><rect x="39" y="48" width="1" height="1.6" fill="#808080"/><rect x="16" y="50" width="1" height="1.6" fill="#808080"/><rect x="17" y="50" width="6" height="1.6" fill="#569cd6"/><rect x="23" y="50" width="1" height="1.6" fill="#808080"/><rect x="24" y="50" width="12" height="1.6" fill="#cccccc"/><rect x="36" y="50" width="2" height="1.6" fill="#808080"/><rect x="38" y="50" width="6" height="1.6" fill="#569cd6"/><rect x="44" y="50" width="1" height="1.6" fill="#808080"/><rect x="12" y="52" width="2" height="1.6" fill="#808080"/><rect x="14" y="52" width="3" height="1.6" fill="#569cd6"/><rect x="17" y="52" width="1" height="1.6" fill="#808080"/><rect x="12" y="54" width="1" height="1.6" fill="#808080"/><rect x="13" y="54" width="3" height="1.6" fill="#569cd6"/><rect x="17" y="54" width="5" height="1.6" fill="#9cdcfe"/><rect x="22" y="54" width="1" height="1.6" fill="#cccccc"/><rect x="23" y="54" width="6" height="1.6" fill="#ce9178"/><rect x="29" y="54" width="1" height="1.6" fill="#808080"/><rect x="16" y="56" width="1" height="1.6" fill="#808080"/><rect x="17" y="56" width="1" height="1.6" fill="#569cd6"/><rect x="18" y="56" width="1" height="1.6" fill="#808080"/><rect x="19" y="56" width="1" height="1.6" fill="#808080"/><rect x="20" y="56" width="1" height="1.6" fill="#569cd6"/><rect x="21" y="56" width="1" height="1.6" fill="#808080"/><rect x="22" y="56" width="8" height="1.6" fill="#cccccc"/><rect x="31" y="56" width="4" height="1.6" fill="#cccccc"/><rect x="35" y="56" width="2" height="1.6" fill="#808080"/><rect x="37" y="56" width="1" height="1.6" fill="#569cd6"/><rect x="38" y="56" width="1" height="1.6" fill="#808080"/><rect x="39" y="56" width="2" height="1.6" fill="#808080"/><rect x="41" y="56" width="1" height="1.6" fill="#569cd6"/><rect x="42" y="56" width="1" height="1.6" fill="#808080"/><rect x="16" y="58" width="1" height="1.6" fill="#808080"/><rect x="17" y="58" width="1" height="1.6" fill="#569cd6"/><rect x="18" y="58" width="1" height="1.6" fill="#808080"/><rect x="19" y="58" width="5" height="1.6" fill="#cccccc"/><rect x="25" y="58" width="5" height="1.6" fill="#cccccc"/><rect x="30" y="58" width="2" height="1.6" fill="#808080"/><rect x="32" y="58" width="1" height="1.6" fill="#569cd6"/><rect x="33" y="58" width="1" height="1.6" fill="#808080"/><rect x="12" y="60" width="2" height="1.6" fill="#808080"/><rect x="14" y="60" width="3" height="1.6" fill="#569cd6"/><rect x="17" y="60" width="1" height="1.6" fill="#808080"/><rect x="8" y="64" width="2" height="1.6" fill="#808080"/><rect x="10" y="64" width="7" height="1.6" fill="#569cd6"/><rect x="17" y="64" width="1" height="1.6" fill="#808080"/><rect x="8" y="66" width="1" height="1.6" fill="#808080"/><rect x="9" y="66" width="7" height="1.6" fill="#569cd6"/><rect x="17" y="66" width="5" height="1.6" fill="#9cdcfe"/><rect x="22" y="66" width="1" height="1.6" fill="#cccccc"/><rect x="23" y="66" width="7" height="1.6" fill="#ce9178"/><rect x="31" y="66" width="2" height="1.6" fill="#9cdcfe"/><rect x="33" y="66" width="1" height="1.6" fill="#cccccc"/><rect x="34" y="66" width="7" height="1.6" fill="#ce9178"/><rect x="41" y="66" width="1" height="1.6" fill="#808080"/><rect x="12" y="68" width="1" height="1.6" fill="#808080"/><rect x="13" y="68" width="3" height="1.6" fill="#569cd6"/><rect x="17" y="68" width="5" height="1.6" fill="#9cdcfe"/><rect x="22" y="68" width="1" height="1.6" fill="#cccccc"/><rect x="23" y="68" width="9" height="1.6" fill="#ce9178"/><rect x="32" y="68" width="1" height="1.6" fill="#808080"/><rect x="16" y="72" width="1" height="1.6" fill="#808080"/><rect x="17" y="72" width="3" height="1.6" fill="#569cd6"/><rect x="21" y="72" width="5" height="1.6" fill="#9cdcfe"/><rect x="26" y="72" width="1" height="1.6" fill="#cccccc"/><rect x="27" y="72" width="6" height="1.6" fill="#ce9178"/><rect x="33" y="72" width="1" height="1.6" fill="#808080"/><rect x="20" y="74" width="1" height="1.6" fill="#808080"/><rect x="21" y="74" width="1" height="1.6" fill="#569cd6"/><rect x="23" y="74" width="4" height="1.6" fill="#9cdcfe"/><rect x="27" y="74" width="1" height="1.6" fill="#cccccc"/><rect x="28" y="74" width="2" height="1.6" fill="#ce9178"/><rect x="30" y="74" width="1" height="1.6" fill="#808080"/><rect x="31" y="74" width="4" height="1.6" fill="#cccccc"/><rect x="35" y="74" width="2" height="1.6" fill="#808080"/><rect x="37" y="74" width="1" height="1.6" fill="#569cd6"/><rect x="38" y="74" width="1" height="1.6" fill="#808080"/><rect x="16" y="76" width="2" height="1.6" fill="#808080"/><rect x="18" y="76" width="3" height="1.6" fill="#569cd6"/><rect x="21" y="76" width="1" height="1.6" fill="#808080"/><rect x="16" y="78" width="1" height="1.6" fill="#808080"/><rect x="17" y="78" width="3" height="1.6" fill="#569cd6"/><rect x="21" y="78" width="5" height="1.6" fill="#9cdcfe"/><rect x="26" y="78" width="1" height="1.6" fill="#cccccc"/><rect x="27" y="78" width="9" height="1.6" fill="#ce9178"/><rect x="36" y="78" width="1" height="1.6" fill="#808080"/><rect x="20" y="80" width="1" height="1.6" fill="#808080"/><rect x="21" y="80" width="3" height="1.6" fill="#569cd6"/><rect x="25" y="80" width="5" height="1.6" fill="#9cdcfe"/><rect x="30" y="80" width="1" height="1.6" fill="#cccccc"/><rect x="31" y="80" width="5" height="1.6" fill="#ce9178"/><rect x="37" y="80" width="2" height="1.6" fill="#9cdcfe"/><rect x="39" y="80" width="1" height="1.6" fill="#cccccc"/><rect x="40" y="80" width="5" height="1.6" fill="#ce9178"/><rect x="45" y="80" width="1" height="1.6" fill="#808080"/><rect x="46" y="80" width="1" height="1.6" fill="#808080"/><rect x="47" y="80" width="3" height="1.6" fill="#569cd6"/><rect x="51" y="80" width="3" height="1.6" fill="#9cdcfe"/><rect x="54" y="80" width="1" height="1.6" fill="#cccccc"/><rect x="55" y="80" width="2" height="1.6" fill="#ce9178"/><rect x="58" y="80" width="3" height="1.6" fill="#9cdcfe"/><rect x="61" y="80" width="1" height="1.6" fill="#cccccc"/><rect x="62" y="80" width="2" height="1.6" fill="#ce9178"/><rect x="64" y="80" width="1" height="1.6" fill="#808080"/><rect x="65" y="80" width="2" height="1.6" fill="#808080"/><rect x="67" y="80" width="3" height="1.6" fill="#569cd6"/><rect x="70" y="80" width="1" height="1.6" fill="#808080"/><rect x="20" y="82" width="1" height="1.6" fill="#808080"/><rect x="21" y="82" width="1" height="1.6" fill="#569cd6"/><rect x="22" y="82" width="1" height="1.6" fill="#808080"/><rect x="23" y="82" width="1" height="1.6" fill="#808080"/><rect x="24" y="82" width="1" height="1.6" fill="#569cd6"/><rect x="25" y="82" width="1" height="1.6" fill="#808080"/><rect x="26" y="82" width="8" height="1.6" fill="#cccccc"/><rect x="35" y="82" width="14" height="1.6" fill="#cccccc"/><rect x="49" y="82" width="2" height="1.6" fill="#808080"/><rect x="51" y="82" width="1" height="1.6" fill="#569cd6"/><rect x="52" y="82" width="1" height="1.6" fill="#808080"/><rect x="53" y="82" width="2" height="1.6" fill="#808080"/><rect x="55" y="82" width="1" height="1.6" fill="#569cd6"/><rect x="56" y="82" width="1" height="1.6" fill="#808080"/><rect x="20" y="84" width="1" height="1.6" fill="#808080"/><rect x="21" y="84" width="6" height="1.6" fill="#569cd6"/><rect x="28" y="84" width="5" height="1.6" fill="#9cdcfe"/><rect x="33" y="84" width="1" height="1.6" fill="#cccccc"/><rect x="34" y="84" width="5" height="1.6" fill="#ce9178"/><rect x="39" y="84" width="1" height="1.6" fill="#808080"/><rect x="40" y="84" width="1" height="1.6" fill="#cccccc"/><rect x="41" y="84" width="2" height="1.6" fill="#808080"/><rect x="43" y="84" width="6" height="1.6" fill="#569cd6"/><rect x="49" y="84" width="1" height="1.6" fill="#808080"/><rect x="24" y="86" width="1" height="1.6" fill="#808080"/><rect x="25" y="86" width="1" height="1.6" fill="#569cd6"/><rect x="27" y="86" width="5" height="1.6" fill="#9cdcfe"/><rect x="32" y="86" width="1" height="1.6" fill="#cccccc"/><rect x="33" y="86" width="3" height="1.6" fill="#ce9178"/><rect x="37" y="86" width="7" height="1.6" fill="#ce9178"/><rect x="44" y="86" width="1" height="1.6" fill="#808080"/><rect x="45" y="86" width="2" height="1.6" fill="#808080"/><rect x="47" y="86" width="1" height="1.6" fill="#569cd6"/><rect x="48" y="86" width="1" height="1.6" fill="#808080"/><rect x="16" y="88" width="2" height="1.6" fill="#808080"/><rect x="18" y="88" width="3" height="1.6" fill="#569cd6"/><rect x="21" y="88" width="1" height="1.6" fill="#808080"/><rect x="12" y="90" width="2" height="1.6" fill="#808080"/><rect x="14" y="90" width="3" height="1.6" fill="#569cd6"/><rect x="17" y="90" width="1" height="1.6" fill="#808080"/><rect x="12" y="94" width="1" height="1.6" fill="#808080"/><rect x="13" y="94" width="3" height="1.6" fill="#569cd6"/><rect x="17" y="94" width="5" height="1.6" fill="#9cdcfe"/><rect x="22" y="94" width="1" height="1.6" fill="#cccccc"/><rect x="23" y="94" width="4" height="1.6" fill="#ce9178"/><rect x="27" y="94" width="1" height="1.6" fill="#808080"/><rect x="12" y="96" width="1" height="1.6" fill="#808080"/><rect x="13" y="96" width="3" height="1.6" fill="#569cd6"/><rect x="17" y="96" width="5" height="1.6" fill="#9cdcfe"/><rect x="22" y="96" width="1" height="1.6" fill="#cccccc"/><rect x="23" y="96" width="7" height="1.6" fill="#ce9178"/><rect x="30" y="96" width="1" height="1.6" fill="#808080"/><rect x="16" y="98" width="1" height="1.6" fill="#808080"/><rect x="17" y="98" width="3" height="1.6" fill="#569cd6"/><rect x="21" y="98" width="5" height="1.6" fill="#9cdcfe"/><rect x="26" y="98" width="1" height="1.6" fill="#cccccc"/><rect x="27" y="98" width="5" height="1.6" fill="#ce9178"/><rect x="32" y="98" width="1" height="1.6" fill="#808080"/><rect x="20" y="102" width="1" height="1.6" fill="#808080"/><rect x="21" y="102" width="3" height="1.6" fill="#569cd6"/><rect x="25" y="102" width="5" height="1.6" fill="#9cdcfe"/><rect x="30" y="102" width="1" height="1.6" fill="#cccccc"/><rect x="31" y="102" width="4" height="1.6" fill="#ce9178"/><rect x="35" y="102" width="1" height="1.6" fill="#808080"/><rect x="24" y="104" width="1" height="1.6" fill="#808080"/><rect x="25" y="104" width="3" height="1.6" fill="#569cd6"/><rect x="29" y="104" width="3" height="1.6" fill="#9cdcfe"/><rect x="32" y="104" width="1" height="1.6" fill="#cccccc"/><rect x="33" y="104" width="2" height="1.6" fill="#ce9178"/><rect x="36" y="104" width="3" height="1.6" fill="#9cdcfe"/><rect x="39" y="104" width="1" height="1.6" fill="#cccccc"/><rect x="40" y="104" width="7" height="1.6" fill="#ce9178"/><rect x="47" y="104" width="1" height="1.6" fill="#808080"/><rect x="24" y="106" width="1" height="1.6" fill="#808080"/><rect x="25" y="106" width="6" height="1.6" fill="#569cd6"/><rect x="31" y="106" width="1" height="1.6" fill="#808080"/><rect x="32" y="106" width="5" height="1.6" fill="#cccccc"/><rect x="37" y="106" width="2" height="1.6" fill="#808080"/><rect x="39" y="106" width="6" height="1.6" fill="#569cd6"/><rect x="45" y="106" width="1" height="1.6" fill="#808080"/><rect x="20" y="108" width="2" height="1.6" fill="#808080"/><rect x="22" y="108" width="3" height="1.6" fill="#569cd6"/><rect x="25" y="108" width="1" height="1.6" fill="#808080"/><rect x="20" y="110" width="1" height="1.6" fill="#808080"/><rect x="21" y="110" width="3" height="1.6" fill="#569cd6"/><rect x="25" y="110" width="5" height="1.6" fill="#9cdcfe"/><rect x="30" y="110" width="1" height="1.6" fill="#cccccc"/><rect x="31" y="110" width="4" height="1.6" fill="#ce9178"/><rect x="35" y="110" width="1" height="1.6" fill="#808080"/><rect x="24" y="112" width="1" height="1.6" fill="#808080"/><rect x="25" y="112" width="3" height="1.6" fill="#569cd6"/><rect x="29" y="112" width="3" height="1.6" fill="#9cdcfe"/><rect x="32" y="112" width="1" height="1.6" fill="#cccccc"/><rect x="33" y="112" width="2" height="1.6" fill="#ce9178"/><rect x="36" y="112" width="3" height="1.6" fill="#9cdcfe"/><rect x="39" y="112" width="1" height="1.6" fill="#cccccc"/><rect x="40" y="112" width="7" height="1.6" fill="#ce9178"/><rect x="47" y="112" width="1" height="1.6" fill="#808080"/><rect x="24" y="114" width="1" height="1.6" fill="#808080"/><rect x="25" y="114" width="6" height="1.6" fill="#569cd6"/><rect x="31" y="114" width="1" height="1.6" fill="#808080"/><rect x="32" y="114" width="5" height="1.6" fill="#cccccc"/><rect x="37" y="114" width="2" height="1.6" fill="#808080"/><rect x="39" y="114" width="6" height="1.6" fill="#569cd6"/><rect x="45" y="114" width="1" height="1.6" fill="#808080"/><rect x="20" y="116" width="2" height="1.6" fill="#808080"/><rect x="22" y="116" width="3" height="1.6" fill="#569cd6"/><rect x="25" y="116" width="1" height="1.6" fill="#808080"/><rect x="20" y="118" width="1" height="1.6" fill="#808080"/><rect x="21" y="118" width="3" height="1.6" fill="#569cd6"/><rect x="25" y="118" width="5" height="1.6" fill="#9cdcfe"/><rect x="30" y="118" width="1" height="1.6" fill="#cccccc"/><rect x="31" y="118" width="4" height="1.6" fill="#ce9178"/><rect x="35" y="118" width="1" height="1.6" fill="#808080"/><rect x="24" y="120" width="1" height="1.6" fill="#808080"/><rect x="25" y="120" width="3" height="1.6" fill="#569cd6"/><rect x="29" y="120" width="3" height="1.6" fill="#9cdcfe"/><rect x="32" y="120" width="1" height="1.6" fill="#cccccc"/><rect x="33" y="120" width="2" height="1.6" fill="#ce9178"/><rect x="36" y="120" width="3" height="1.6" fill="#9cdcfe"/><rect x="39" y="120" width="1" height="1.6" fill="#cccccc"/><rect x="40" y="120" width="7" height="1.6" fill="#ce9178"/><rect x="47" y="120" width="1" height="1.6" fill="#808080"/><rect x="24" y="122" width="1" height="1.6" fill="#808080"/><rect x="25" y="122" width="6" height="1.6" fill="#569cd6"/><rect x="31" y="122" width="1" height="1.6" fill="#808080"/><rect x="32" y="122" width="5" height="1.6" fill="#cccccc"/><rect x="37" y="122" width="2" height="1.6" fill="#808080"/><rect x="39" y="122" width="6" height="1.6" fill="#569cd6"/><rect x="45" y="122" width="1" height="1.6" fill="#808080"/><rect x="20" y="124" width="2" height="1.6" fill="#808080"/><rect x="22" y="124" width="3" height="1.6" fill="#569cd6"/><rect x="25" y="124" width="1" height="1.6" fill="#808080"/><rect x="20" y="126" width="1" height="1.6" fill="#808080"/><rect x="21" y="126" width="3" height="1.6" fill="#569cd6"/><rect x="25" y="126" width="5" height="1.6" fill="#9cdcfe"/><rect x="30" y="126" width="1" height="1.6" fill="#cccccc"/><rect x="31" y="126" width="4" height="1.6" fill="#ce9178"/><rect x="35" y="126" width="1" height="1.6" fill="#808080"/><rect x="24" y="128" width="1" height="1.6" fill="#808080"/><rect x="25" y="128" width="3" height="1.6" fill="#569cd6"/><rect x="29" y="128" width="3" height="1.6" fill="#9cdcfe"/><rect x="32" y="128" width="1" height="1.6" fill="#cccccc"/><rect x="33" y="128" width="2" height="1.6" fill="#ce9178"/><rect x="36" y="128" width="3" height="1.6" fill="#9cdcfe"/><rect x="39" y="128" width="1" height="1.6" fill="#cccccc"/><rect x="40" y="128" width="7" height="1.6" fill="#ce9178"/><rect x="47" y="128" width="1" height="1.6" fill="#808080"/><rect x="24" y="130" width="1" height="1.6" fill="#808080"/><rect x="25" y="130" width="6" height="1.6" fill="#569cd6"/><rect x="31" y="130" width="1" height="1.6" fill="#808080"/><rect x="32" y="130" width="5" height="1.6" fill="#cccccc"/><rect x="37" y="130" width="2" height="1.6" fill="#808080"/><rect x="39" y="130" width="6" height="1.6" fill="#569cd6"/><rect x="45" y="130" width="1" height="1.6" fill="#808080"/><rect x="20" y="132" width="2" height="1.6" fill="#808080"/><rect x="22" y="132" width="3" height="1.6" fill="#569cd6"/><rect x="25" y="132" width="1" height="1.6" fill="#808080"/><rect x="20" y="136" width="1" height="1.6" fill="#808080"/><rect x="21" y="136" width="3" height="1.6" fill="#569cd6"/><rect x="25" y="136" width="5" height="1.6" fill="#9cdcfe"/><rect x="30" y="136" width="1" height="1.6" fill="#cccccc"/><rect x="31" y="136" width="4" height="1.6" fill="#ce9178"/><rect x="35" y="136" width="1" height="1.6" fill="#808080"/><rect x="24" y="138" width="1" height="1.6" fill="#808080"/><rect x="25" y="138" width="3" height="1.6" fill="#569cd6"/><rect x="29" y="138" width="3" height="1.6" fill="#9cdcfe"/><rect x="32" y="138" width="1" height="1.6" fill="#cccccc"/><rect x="33" y="138" width="2" height="1.6" fill="#ce9178"/><rect x="36" y="138" width="3" height="1.6" fill="#9cdcfe"/><rect x="39" y="138" width="1" height="1.6" fill="#cccccc"/><rect x="40" y="138" width="7" height="1.6" fill="#ce9178"/><rect x="47" y="138" width="1" height="1.6" fill="#808080"/><rect x="24" y="140" width="1" height="1.6" fill="#808080"/><rect x="25" y="140" width="6" height="1.6" fill="#569cd6"/><rect x="31" y="140" width="1" height="1.6" fill="#808080"/><rect x="32" y="140" width="5" height="1.6" fill="#cccccc"/><rect x="37" y="140" width="2" height="1.6" fill="#808080"/><rect x="39" y="140" width="6" height="1.6" fill="#569cd6"/><rect x="45" y="140" width="1" height="1.6" fill="#808080"/><rect x="20" y="142" width="2" height="1.6" fill="#808080"/><rect x="22" y="142" width="3" height="1.6" fill="#569cd6"/><rect x="25" y="142" width="1" height="1.6" fill="#808080"/><rect x="20" y="144" width="1" height="1.6" fill="#808080"/><rect x="21" y="144" width="3" height="1.6" fill="#569cd6"/><rect x="25" y="144" width="5" height="1.6" fill="#9cdcfe"/><rect x="30" y="144" width="1" height="1.6" fill="#cccccc"/><rect x="31" y="144" width="4" height="1.6" fill="#ce9178"/><rect x="35" y="144" width="1" height="1.6" fill="#808080"/><rect x="24" y="146" width="1" height="1.6" fill="#808080"/><rect x="25" y="146" width="3" height="1.6" fill="#569cd6"/><rect x="29" y="146" width="3" height="1.6" fill="#9cdcfe"/><rect x="32" y="146" width="1" height="1.6" fill="#cccccc"/><rect x="33" y="146" width="2" height="1.6" fill="#ce9178"/><rect x="36" y="146" width="3" height="1.6" fill="#9cdcfe"/><rect x="39" y="146" width="1" height="1.6" fill="#cccccc"/><rect x="40" y="146" width="7" height="1.6" fill="#ce9178"/><rect x="47" y="146" width="1" height="1.6" fill="#808080"/><rect x="24" y="148" width="1" height="1.6" fill="#808080"/><rect x="25" y="148" width="6" height="1.6" fill="#569cd6"/><rect x="31" y="148" width="1" height="1.6" fill="#808080"/><rect x="32" y="148" width="5" height="1.6" fill="#cccccc"/><rect x="37" y="148" width="2" height="1.6" fill="#808080"/><rect x="39" y="148" width="6" height="1.6" fill="#569cd6"/><rect x="45" y="148" width="1" height="1.6" fill="#808080"/><rect x="20" y="150" width="2" height="1.6" fill="#808080"/><rect x="22" y="150" width="3" height="1.6" fill="#569cd6"/><rect x="25" y="150" width="1" height="1.6" fill="#808080"/><rect x="20" y="152" width="1" height="1.6" fill="#808080"/><rect x="21" y="152" width="3" height="1.6" fill="#569cd6"/><rect x="25" y="152" width="5" height="1.6" fill="#9cdcfe"/><rect x="30" y="152" width="1" height="1.6" fill="#cccccc"/><rect x="31" y="152" width="4" height="1.6" fill="#ce9178"/><rect x="35" y="152" width="1" height="1.6" fill="#808080"/><rect x="24" y="154" width="1" height="1.6" fill="#808080"/><rect x="25" y="154" width="3" height="1.6" fill="#569cd6"/><rect x="29" y="154" width="3" height="1.6" fill="#9cdcfe"/><rect x="32" y="154" width="1" height="1.6" fill="#cccccc"/><rect x="33" y="154" width="2" height="1.6" fill="#ce9178"/><rect x="36" y="154" width="3" height="1.6" fill="#9cdcfe"/><rect x="39" y="154" width="1" height="1.6" fill="#cccccc"/><rect x="40" y="154" width="7" height="1.6" fill="#ce9178"/><rect x="47" y="154" width="1" height="1.6" fill="#808080"/><rect x="24" y="156" width="1" height="1.6" fill="#808080"/><rect x="25" y="156" width="6" height="1.6" fill="#569cd6"/><rect x="31" y="156" width="1" height="1.6" fill="#808080"/><rect x="32" y="156" width="5" height="1.6" fill="#cccccc"/><rect x="37" y="156" width="2" height="1.6" fill="#808080"/><rect x="39" y="156" width="6" height="1.6" fill="#569cd6"/><rect x="45" y="156" width="1" height="1.6" fill="#808080"/><rect x="20" y="158" width="2" height="1.6" fill="#808080"/><rect x="22" y="158" width="3" height="1.6" fill="#569cd6"/><rect x="25" y="158" width="1" height="1.6" fill="#808080"/><rect x="20" y="160" width="1" height="1.6" fill="#808080"/><rect x="21" y="160" width="3" height="1.6" fill="#569cd6"/><rect x="25" y="160" width="5" height="1.6" fill="#9cdcfe"/><rect x="30" y="160" width="1" height="1.6" fill="#cccccc"/><rect x="31" y="160" width="4" height="1.6" fill="#ce9178"/><rect x="35" y="160" width="1" height="1.6" fill="#808080"/><rect x="24" y="162" width="1" height="1.6" fill="#808080"/><rect x="25" y="162" width="3" height="1.6" fill="#569cd6"/><rect x="29" y="162" width="3" height="1.6" fill="#9cdcfe"/><rect x="32" y="162" width="1" height="1.6" fill="#cccccc"/><rect x="33" y="162" width="2" height="1.6" fill="#ce9178"/><rect x="36" y="162" width="3" height="1.6" fill="#9cdcfe"/><rect x="39" y="162" width="1" height="1.6" fill="#cccccc"/><rect x="40" y="162" width="7" height="1.6" fill="#ce9178"/><rect x="47" y="162" width="1" height="1.6" fill="#808080"/><rect x="24" y="164" width="1" height="1.6" fill="#808080"/><rect x="25" y="164" width="6" height="1.6" fill="#569cd6"/><rect x="31" y="164" width="1" height="1.6" fill="#808080"/><rect x="32" y="164" width="5" height="1.6" fill="#cccccc"/><rect x="37" y="164" width="2" height="1.6" fill="#808080"/><rect x="39" y="164" width="6" height="1.6" fill="#569cd6"/><rect x="45" y="164" width="1" height="1.6" fill="#808080"/><rect x="20" y="166" width="2" height="1.6" fill="#808080"/><rect x="22" y="166" width="3" height="1.6" fill="#569cd6"/><rect x="25" y="166" width="1" height="1.6" fill="#808080"/><rect x="16" y="168" width="2" height="1.6" fill="#808080"/><rect x="18" y="168" width="3" height="1.6" fill="#569cd6"/><rect x="21" y="168" width="1" height="1.6" fill="#808080"/><rect x="16" y="172" width="2" height="1.6" fill="#808080"/><rect x="18" y="172" width="3" height="1.6" fill="#569cd6"/><rect x="21" y="172" width="1" height="1.6" fill="#808080"/><rect x="16" y="174" width="1" height="1.6" fill="#808080"/><rect x="17" y="174" width="3" height="1.6" fill="#569cd6"/><rect x="21" y="174" width="5" height="1.6" fill="#9cdcfe"/><rect x="26" y="174" width="1" height="1.6" fill="#cccccc"/><rect x="27" y="174" width="6" height="1.6" fill="#ce9178"/><rect x="33" y="174" width="1" height="1.6" fill="#808080"/><rect x="20" y="178" width="1" height="1.6" fill="#808080"/><rect x="21" y="178" width="3" height="1.6" fill="#569cd6"/><rect x="25" y="178" width="5" height="1.6" fill="#9cdcfe"/><rect x="30" y="178" width="1" height="1.6" fill="#cccccc"/><rect x="31" y="178" width="5" height="1.6" fill="#ce9178"/><rect x="36" y="178" width="1" height="1.6" fill="#808080"/><rect x="24" y="180" width="1" height="1.6" fill="#808080"/><rect x="25" y="180" width="6" height="1.6" fill="#569cd6"/><rect x="31" y="180" width="1" height="1.6" fill="#808080"/><rect x="32" y="180" width="7" height="1.6" fill="#cccccc"/><rect x="39" y="180" width="2" height="1.6" fill="#808080"/><rect x="41" y="180" width="6" height="1.6" fill="#569cd6"/><rect x="47" y="180" width="1" height="1.6" fill="#808080"/><rect x="20" y="182" width="2" height="1.6" fill="#808080"/><rect x="22" y="182" width="3" height="1.6" fill="#569cd6"/><rect x="25" y="182" width="1" height="1.6" fill="#808080"/><rect x="20" y="184" width="1" height="1.6" fill="#808080"/><rect x="21" y="184" width="3" height="1.6" fill="#569cd6"/><rect x="25" y="184" width="5" height="1.6" fill="#9cdcfe"/><rect x="30" y="184" width="1" height="1.6" fill="#cccccc"/><rect x="31" y="184" width="5" height="1.6" fill="#ce9178"/><rect x="36" y="184" width="1" height="1.6" fill="#808080"/><rect x="24" y="186" width="1" height="1.6" fill="#808080"/><rect x="25" y="186" width="6" height="1.6" fill="#569cd6"/><rect x="31" y="186" width="1" height="1.6" fill="#808080"/><rect x="32" y="186" width="4" height="1.6" fill="#cccccc"/><rect x="36" y="186" width="2" height="1.6" fill="#808080"/><rect x="38" y="186" width="6" height="1.6" fill="#569cd6"/><rect x="44" y="186" width="1" height="1.6" fill="#808080"/><rect x="20" y="188" width="2" height="1.6" fill="#808080"/><rect x="22" y="188" width="3" height="1.6" fill="#569cd6"/><rect x="25" y="188" width="1" height="1.6" fill="#808080"/><rect x="16" y="192" width="2" height="1.6" fill="#808080"/><rect x="18" y="192" width="3" height="1.6" fill="#569cd6"/><rect x="21" y="192" width="1" height="1.6" fill="#808080"/><rect x="12" y="196" width="2" height="1.6" fill="#808080"/><rect x="14" y="196" width="3" height="1.6" fill="#569cd6"/><rect x="17" y="196" width="1" height="1.6" fill="#808080"/><rect x="8" y="198" width="2" height="1.6" fill="#808080"/><rect x="10" y="198" width="7" height="1.6" fill="#569cd6"/><rect x="17" y="198" width="1" height="1.6" fill="#808080"/><rect x="4" y="200" width="2" height="1.6" fill="#808080"/><rect x="6" y="200" width="3" height="1.6" fill="#569cd6"/><rect x="9" y="200" width="1" height="1.6" fill="#808080"/><rect x="4" y="210" width="1" height="1.6" fill="#808080"/><rect x="5" y="210" width="6" height="1.6" fill="#569cd6"/><rect x="12" y="210" width="3" height="1.6" fill="#9cdcfe"/><rect x="15" y="210" width="1" height="1.6" fill="#cccccc"/><rect x="16" y="210" width="11" height="1.6" fill="#ce9178"/><rect x="27" y="210" width="1" height="1.6" fill="#808080"/><rect x="28" y="210" width="2" height="1.6" fill="#808080"/><rect x="30" y="210" width="6" height="1.6" fill="#569cd6"/><rect x="36" y="210" width="1" height="1.6" fill="#808080"/><rect x="0" y="212" width="2" height="1.6" fill="#808080"/><rect x="2" y="212" width="4" height="1.6" fill="#569cd6"/><rect x="6" y="212" width="1" height="1.6" fill="#808080"/><rect x="0" y="214" width="2" height="1.6" fill="#808080"/><rect x="2" y="214" width="4" height="1.6" fill="#569cd6"/><rect x="6" y="214" width="1" height="1.6" fill="#808080"/></svg><div class="a" style="left:1080px;top:87px;width:1px;height:490px;background:#171717"></div><div class="a" style="left:1081px;top:425px;width:13px;height:2px;background:#8a8a8a"></div><div class="a" style="left:990px;top:87px;width:1px;height:38px;background:#141414"></div><!--/MM--><!--PANEL-->
 <div class="a" style="left:299px;top:577px;width:795px;height:257px;background:#181818;border-top:1px solid #2b2b2b"></div>
 <div class="a" style="left:299px;top:578px;width:795px;height:235px;overflow:hidden"><div class="a" style="left:-299px;top:-578px;width:1094px;height:846px">
  <div class="cl code err" style="left:329px;top:600px">    at &lt;anonymous&gt; (f:\work\Ponion\script.js:14:27)</div>
  <div class="cl code err" style="left:329px;top:618.0px">Uncaught ReferenceError ReferenceError: e is not defined</div><div class="cl code err" style="left:329px;top:638.0px">    at &lt;anonymous&gt; (f:\work\Ponion\script.js:14:27)</div><div class="cl code" style="left:994px;top:618.0px;color:#cccccc;text-decoration:underline">script.js:14</div><svg class="a" style="left:313px;top:631.5px" width="10" height="12"><path d="M2 1.5l5 4.5-5 4.5" stroke="#cccccc" stroke-width="1.2" fill="none"/></svg><div class="cl code err" style="left:329px;top:657.0px">Uncaught ReferenceError ReferenceError: e is not defined</div><div class="cl code err" style="left:329px;top:677.0px">    at &lt;anonymous&gt; (f:\work\Ponion\script.js:14:27)</div><div class="cl code" style="left:994px;top:657.0px;color:#cccccc;text-decoration:underline">script.js:14</div><svg class="a" style="left:313px;top:670.5px" width="10" height="12"><path d="M2 1.5l5 4.5-5 4.5" stroke="#cccccc" stroke-width="1.2" fill="none"/></svg><div class="cl code err" style="left:329px;top:696.0px">Uncaught ReferenceError ReferenceError: e is not defined</div><div class="cl code err" style="left:329px;top:716.0px">    at &lt;anonymous&gt; (f:\work\Ponion\script.js:14:27)</div><div class="cl code" style="left:994px;top:696.0px;color:#cccccc;text-decoration:underline">script.js:14</div><svg class="a" style="left:313px;top:709.5px" width="10" height="12"><path d="M2 1.5l5 4.5-5 4.5" stroke="#cccccc" stroke-width="1.2" fill="none"/></svg><div class="cl code err" style="left:329px;top:735.0px">Uncaught ReferenceError ReferenceError: e is not defined</div><div class="cl code err" style="left:329px;top:755.0px">    at &lt;anonymous&gt; (f:\work\Ponion\script.js:14:27)</div><div class="cl code" style="left:994px;top:735.0px;color:#cccccc;text-decoration:underline">script.js:14</div><svg class="a" style="left:313px;top:748.5px" width="10" height="12"><path d="M2 1.5l5 4.5-5 4.5" stroke="#cccccc" stroke-width="1.2" fill="none"/></svg><div class="cl code err" style="left:329px;top:774.0px">Uncaught ReferenceError ReferenceError: e is not defined</div><div class="cl code err" style="left:329px;top:794.0px">    at &lt;anonymous&gt; (f:\work\Ponion\script.js:14:27)</div><div class="cl code" style="left:994px;top:774.0px;color:#cccccc;text-decoration:underline">script.js:14</div><svg class="a" style="left:313px;top:787.5px" width="10" height="12"><path d="M2 1.5l5 4.5-5 4.5" stroke="#cccccc" stroke-width="1.2" fill="none"/></svg>
 </div></div>
 <div class="a" style="left:299px;top:578px;width:795px;height:34px;background:#181818;box-shadow:0 3px 4px -2px #000"></div>
 <span class="t ptab" style="left:319px">PROBLEMS</span>
 <span class="t ptab" style="left:397px">OUTPUT</span>
 <span class="t ptab" style="left:462px;color:#e7e7e7">DEBUG CONSOLE</span>
 <div class="a" style="left:460px;top:605px;width:89px;height:1px;background:#0078d4"></div>
 <span class="t ptab" style="left:572px">TERMINAL</span>
 <span class="t ptab" style="left:647px">PORTS</span>
 <div class="a" style="left:696px;top:585px;width:281px;height:23px;background:#2a2a2a;border-radius:2px"></div>
 <span class="t" style="left:703px;top:591px;font-size:12.4px;color:#8b8b8b">Filter (e.g. text, !exclude, \escape)</span>
 <svg class="a" style="left:984px;top:587px" width="18" height="18"><circle cx="10.5" cy="7" r="5" stroke="#cccccc" stroke-width="1.3" fill="none"/><path d="M7 10.5 2 15.5" stroke="#cccccc" stroke-width="1.5"/></svg>
 <svg class="a" style="left:1011px;top:589px" width="17" height="14"><path d="M1 2h14M1 5.5h14M1 9h8M1 12.5h8" stroke="#cccccc" stroke-width="1.2"/><path d="M10.5 8.5l4 4M14.5 8.5l-4 4" stroke="#cccccc" stroke-width="1.2"/></svg>
 <svg class="a" style="left:1039px;top:590px" width="12" height="10"><path d="M1 7l5-5 5 5" stroke="#cccccc" stroke-width="1.3" fill="none"/></svg>
 <svg class="a" style="left:1065px;top:589px" width="12" height="12"><path d="M1 1l10 10M11 1 1 11" stroke="#cccccc" stroke-width="1.3"/></svg>
 <div class="a" style="left:299px;top:812px;width:795px;height:1px;background:#2b2b2b"></div>
 <svg class="a" style="left:311px;top:817px" width="10" height="13"><path d="M2 1.5l5 5-5 5" stroke="#cccccc" stroke-width="1.4" fill="none"/></svg>
<!--/PANEL-->

 <div id="status" class="a">
  <svg class="a" style="left:7px;top:3px" width="12" height="12"><path d="M1 6l4-4M1 6l4 4M11 2 7 6M11 2" stroke="#fff" stroke-width="1.3" fill="none"/></svg>
  <svg class="a" style="left:37px;top:3px" width="90" height="12"><circle cx="7" cy="7" r="5.8" stroke="#fff" stroke-width="1.2" fill="none"/><path d="M4.5 4.5l5 5M9.5 4.5l-5 5" stroke="#fff" stroke-width="1.2"/><path d="M34 1 28.5 11h11z" stroke="#fff" stroke-width="1.2" fill="none" stroke-linejoin="round"/></svg>
  <span class="t stt" style="left:54px">0</span><span class="t stt" style="left:81px">0</span>
  <svg class="a" style="left:104px;top:3px" width="16" height="12"><path d="M3 1a6 6 0 0 0 0 9M13 1a6 6 0 0 1 0 9M5.5 3a3 3 0 0 0 0 5M10.5 3a3 3 0 0 1 0 5" stroke="#fff" stroke-width="1.1" fill="none"/><path d="M8 4v8" stroke="#fff" stroke-width="1.2"/></svg>
  <span class="t stt" style="left:121px">0</span>
  <svg class="a" style="left:142px;top:3px" width="16" height="12"><path d="M2 10a5 5 0 0 1 8-4l2-2v5H7l2-2" stroke="#fff" stroke-width="1.2" fill="none"/></svg>
  <span class="t stt" style="left:779px">Ln 93, Col 37</span>
  <span class="t stt" style="left:863px">Spaces: 4</span>
  <span class="t stt" style="left:928px">UTF-8</span>
  <span class="t stt" style="left:976px">CRLF</span>
  <span class="t stt" style="left:1018px">HTML</span>
  <svg class="a" style="left:1066px;top:4px" width="12" height="10"><path d="M2 10V6a4 4 0 0 1 8 0v4" stroke="#fff" stroke-width="1.2" fill="none"/></svg>
 </div>
</div>
<div class="a" style="left:1094px;top:0;width:2px;height:125px;background:#0b3d8c"></div>
<div class="a" style="left:1094px;top:125px;width:2px;height:615px;background:#9a9a9a"></div>
<div class="a" style="left:1094px;top:740px;width:2px;height:106px;background:#0b3d8c"></div>
<div id="chrome"><div class="a" style="left:-1096px;top:0;width:1593px;height:846px">
 <div class="a" style="left:1096px;top:0;width:497px;height:35px;background:#d3e3fd"></div>
 <div class="a" style="left:1126px;top:25px;width:10px;height:10px;background:radial-gradient(circle at 0 0,#d3e3fd 9.5px,#fff 10px)"></div>
 <div class="a" style="left:1368px;top:25px;width:10px;height:10px;background:radial-gradient(circle at 100% 0,#d3e3fd 9.5px,#fff 10px)"></div>
 <div class="a" style="left:1102px;top:1px;width:28px;height:28px;background:#e8f0fd;border-radius:9px"></div>
 <svg class="a" style="left:1110px;top:10px" width="12" height="10"><path d="M2 3l4 4 4-4" stroke="#1f1f1f" stroke-width="1.6" fill="none"/></svg>
 <div class="a" style="left:1136px;top:1px;width:232px;height:35px;background:#fff;border-radius:10px 10px 0 0"></div>
 <svg class="a" style="left:1145px;top:8px" width="15" height="15" viewBox="0 0 16 16"><circle cx="8" cy="8" r="7" fill="#5f6368"/><path d="M1.6 6.8C2.8 5.6 4.6 5.6 5.6 6.6s.6 2.4 2 3.1c1 .5.9 1.9.3 2.8L6.3 14.6C5.4 13 4.8 11.8 3.6 11.2 2.6 10.7 1.6 9.8 1.3 8.6z" fill="#fff"/><path d="M9.2 1.3c.5 1.2-.3 2.3.6 3.1.8.7 2.1.2 2.9 1 .8.8.3 2 1.2 2.6l.9.3c0-1.2-.2-2.4-.8-3.5C13 3.2 11.2 1.8 9.2 1.3z" fill="#fff"/></svg>
 <span class="t" style="left:1168px;top:10px;font-size:12px;color:#1f1f1f">Document</span>
 <svg class="a" style="left:1347px;top:10px" width="11" height="11"><path d="M1.5 1.5l8 8M9.5 1.5l-8 8" stroke="#1f1f1f" stroke-width="1.6"/></svg>
 <svg class="a" style="left:1382px;top:9px" width="12" height="12"><path d="M6 .5v11M.5 6h11" stroke="#1f1f1f" stroke-width="1.6"/></svg>
 <div class="a" style="left:1476px;top:15px;width:11px;height:1px;background:#1f1f1f"></div>
 <div class="a" style="left:1522px;top:10px;width:10px;height:10px;border:1.2px solid #1f1f1f"></div>
 <svg class="a" style="left:1567px;top:10px" width="12" height="12"><path d="M.8 .8l10.4 10.4M11.2 .8.8 11.2" stroke="#1f1f1f" stroke-width="1.2"/></svg>
 <div class="a" style="left:1096px;top:35px;width:10px;height:10px;background:#d3e3fd"></div><div class="a" style="left:1096px;top:35px;width:497px;height:47px;background:#fff;border-bottom:1px solid #dcdcdc;border-top-left-radius:9px"></div>
 <svg class="a" style="left:1110px;top:50px" width="16" height="16"><path d="M14.5 8H2.5M8 2.5 2.5 8 8 13.5" stroke="#9e9e9e" stroke-width="1.6" fill="none"/></svg>
 <svg class="a" style="left:1146px;top:50px" width="16" height="16"><path d="M1.5 8h12M8 2.5 13.5 8 8 13.5" stroke="#9e9e9e" stroke-width="1.6" fill="none"/></svg>
 <svg class="a" style="left:1182px;top:50px" width="16" height="16"><path d="M13 8a5.2 5.2 0 1 1-1.6-3.8" stroke="#474747" stroke-width="1.7" fill="none"/><path d="M13.5 1.5v4.5H9z" fill="#474747"/></svg>
 <div class="a" style="left:1216px;top:41px;width:296px;height:34px;background:#e9eef6;border-radius:17px"></div>
 <div class="a" style="left:1221px;top:46px;width:51px;height:24px;background:#fff;border-radius:12px"></div>
 <svg class="a" style="left:1226px;top:51px" width="14" height="14"><circle cx="7" cy="7" r="6" stroke="#1f1f1f" stroke-width="1.4" fill="none"/><path d="M7 6v4.3" stroke="#1f1f1f" stroke-width="1.5"/><circle cx="7" cy="3.9" r="0.9" fill="#1f1f1f"/></svg>
 <span class="t" style="left:1245px;top:52px;font-size:12.8px;color:#1f1f1f;letter-spacing:-0.5px;-webkit-text-stroke:0.25px #1f1f1f">File</span>
 <span class="t" style="left:1280px;top:51px;font-size:14px;color:#1f1f1f">F:/work/Ponion/index.h...</span>
 <svg class="a" style="left:1448px;top:51px" width="16" height="16"><circle cx="6" cy="6" r="4.8" stroke="#474747" stroke-width="1.6" fill="none"/><path d="M9.5 9.5l5 5M3.5 6h5" stroke="#474747" stroke-width="1.6"/></svg>
 <svg class="a" style="left:1480px;top:50px" width="16" height="16"><path d="M8 1.5l1.9 4.3 4.6.4-3.5 3 1.1 4.5L8 11.3l-4.1 2.4 1.1-4.5-3.5-3 4.6-.4z" stroke="#474747" stroke-width="1.4" fill="none" stroke-linejoin="round"/></svg>
 <div class="a" style="left:1528px;top:48px;width:20px;height:20px;background:#d3e3fd;border-radius:50%"></div>
 <svg class="a" style="left:1531px;top:51px" width="14" height="14"><circle cx="7" cy="4.3" r="2.8" fill="#0b57d0"/><path d="M1.8 12.5c0-2.5 2.3-3.8 5.2-3.8s5.2 1.3 5.2 3.8z" fill="#0b57d0"/></svg>
 <svg class="a" style="left:1571px;top:50px" width="6" height="16"><circle cx="3" cy="2" r="1.6" fill="#474747"/><circle cx="3" cy="8" r="1.6" fill="#474747"/><circle cx="3" cy="14" r="1.6" fill="#474747"/></svg>

 <div class="a" style="left:1103px;top:89px;width:490px;height:31px;background:#1e1e1e"></div>
 <svg class="a" style="left:1104px;top:95px" width="16" height="16" viewBox="0 0 16 16"><path d="M1.5 1.5h9l4 4v9h-13z" fill="#c9d9f2" stroke="#8e8e8e" stroke-width="1"/><path d="M10.5 1.5v4h4" fill="#fff" stroke="#8e8e8e" stroke-width="1"/><path d="M2 14.5c1-4 4-6 7-6 2 0 3 .5 4 1.5l-3 4.5z" fill="#4caf50"/><path d="M3.5 6a1.5 1 0 0 1 3 0 1.5 1 0 0 1 2 0.5h-5z" fill="#fff"/><path d="M9 15 15 9" stroke="#fff" stroke-width="1.6"/><path d="M15 9v6H9" fill="#dde7f5" stroke="none"/></svg>
 <span class="t" style="left:1119px;top:95px;font-family:'Liberation Serif',serif;font-size:13.5px;color:#000">logo</span>
 <span class="t" style="left:1147px;top:91px;font-family:'Liberation Serif',serif;font-style:italic;font-size:20px;color:#fff">Ponion</span>
 <div class="a" style="left:1148px;top:120px;width:445px;height:19px;background:#c9d6e5"></div><div class="a btn" style="left:1103px;top:120px;width:45px;height:19px;border-radius:0;border-color:#a0a0a0 #6a6a6a #6a6a6a #a0a0a0"><svg class="a" style="left:17px;top:6px" width="10" height="9"><path d="M0 .5h9M0 4h9M0 7.5h9" stroke="#555" stroke-width="1"/></svg></div>
 <div class="a" style="left:1101px;top:140px;width:492px;height:691px;border:4px solid #000;border-right:none;border-bottom-width:3px;border-top-width:3px;background:#c9d6e5;box-shadow:0 3px 4px rgba(0,0,0,.35)"></div>
 <div class="a" style="left:1107px;top:143px;width:486px;height:345px;border-left:1px solid #000"></div>
 <div class="a" style="left:1107px;top:487px;width:486px;height:2px;background:#000"></div>
 <div class="a" style="left:1107px;top:489px;width:486px;height:235px;border-left:1px solid #000;border-bottom:1px solid #000"></div>
 <div class="a" style="left:1407px;top:489px;width:2px;height:234px;background:#000"></div>
 <div class="a" style="left:1128px;top:190px;width:286px;height:198px;background:#a2acb5;border-radius:15px;box-shadow:7px 9px 10px #737d88"></div>
 <span class="t" style="left:1149px;top:213px;font-family:'Liberation Serif',serif;font-size:14.4px;color:#551a8b;text-decoration:underline">card</span>
 <div class="a" style="left:1454px;top:163px;width:130px;height:304px;border:1px solid #000;overflow:hidden">
  <div class="a" style="left:16px;top:13px;width:74px;height:74px;border:1px solid #000;border-radius:50%"></div>
  <div class="a" style="left:1px;top:104px;font-family:'Liberation Serif',serif;font-style:italic;font-weight:bold;font-size:19.3px;line-height:22.6px;color:#000;white-space:pre">Balance:
$1000000000000</div>
  <div class="a" style="left:4px;top:182px;width:13px;height:9px;background:#000"></div>
 </div>
 <div class="a" style="left:1117px;top:494px;width:73px;height:84px;background:#e4eef8;border-radius:17px;box-shadow:5px 6px 6px #56606b"></div><svg class="a" style="left:1139px;top:515px" width="15" height="15" viewBox="0 0 16 16"><path d="M1.5 1.5h9l4 4v9h-13z" fill="#c9d9f2" stroke="#8e8e8e" stroke-width="1"/><path d="M10.5 1.5v4h4" fill="#fff" stroke="#8e8e8e" stroke-width="1"/><path d="M2 14.5c1-4 4-6 7-6 2 0 3 .5 4 1.5l-3 4.5z" fill="#4caf50"/><path d="M3.5 6a1.5 1 0 0 1 3 0 1.5 1 0 0 1 2 0.5h-5z" fill="#fff"/><path d="M9 15 15 9" stroke="#fff" stroke-width="1.6"/><path d="M15 9v6H9" fill="#dde7f5" stroke="none"/></svg><span class="t" style="left:1139px;top:531.5px;font-family:'Liberation Serif',serif;font-size:14px;color:#000">icone</span><div class="a btn" style="left:1139px;top:547px;width:41px;height:17px"><span class="t" style="left:6px;top:2px;font-size:11.6px">icone</span></div><div class="a" style="left:1217px;top:494px;width:73px;height:84px;background:#e4eef8;border-radius:17px;box-shadow:5px 6px 6px #56606b"></div><svg class="a" style="left:1239px;top:515px" width="15" height="15" viewBox="0 0 16 16"><path d="M1.5 1.5h9l4 4v9h-13z" fill="#c9d9f2" stroke="#8e8e8e" stroke-width="1"/><path d="M10.5 1.5v4h4" fill="#fff" stroke="#8e8e8e" stroke-width="1"/><path d="M2 14.5c1-4 4-6 7-6 2 0 3 .5 4 1.5l-3 4.5z" fill="#4caf50"/><path d="M3.5 6a1.5 1 0 0 1 3 0 1.5 1 0 0 1 2 0.5h-5z" fill="#fff"/><path d="M9 15 15 9" stroke="#fff" stroke-width="1.6"/><path d="M15 9v6H9" fill="#dde7f5" stroke="none"/></svg><span class="t" style="left:1239px;top:531.5px;font-family:'Liberation Serif',serif;font-size:14px;color:#000">icone</span><div class="a btn" style="left:1239px;top:547px;width:41px;height:17px"><span class="t" style="left:6px;top:2px;font-size:11.6px">icone</span></div><div class="a" style="left:1316px;top:494px;width:73px;height:84px;background:#e4eef8;border-radius:17px;box-shadow:5px 6px 6px #56606b"></div><svg class="a" style="left:1338px;top:515px" width="15" height="15" viewBox="0 0 16 16"><path d="M1.5 1.5h9l4 4v9h-13z" fill="#c9d9f2" stroke="#8e8e8e" stroke-width="1"/><path d="M10.5 1.5v4h4" fill="#fff" stroke="#8e8e8e" stroke-width="1"/><path d="M2 14.5c1-4 4-6 7-6 2 0 3 .5 4 1.5l-3 4.5z" fill="#4caf50"/><path d="M3.5 6a1.5 1 0 0 1 3 0 1.5 1 0 0 1 2 0.5h-5z" fill="#fff"/><path d="M9 15 15 9" stroke="#fff" stroke-width="1.6"/><path d="M15 9v6H9" fill="#dde7f5" stroke="none"/></svg><span class="t" style="left:1338px;top:531.5px;font-family:'Liberation Serif',serif;font-size:14px;color:#000">icone</span><div class="a btn" style="left:1338px;top:547px;width:41px;height:17px"><span class="t" style="left:6px;top:2px;font-size:11.6px">icone</span></div><div class="a" style="left:1117px;top:611px;width:73px;height:84px;background:#e4eef8;border-radius:17px;box-shadow:5px 6px 6px #56606b"></div><svg class="a" style="left:1139px;top:632px" width="15" height="15" viewBox="0 0 16 16"><path d="M1.5 1.5h9l4 4v9h-13z" fill="#c9d9f2" stroke="#8e8e8e" stroke-width="1"/><path d="M10.5 1.5v4h4" fill="#fff" stroke="#8e8e8e" stroke-width="1"/><path d="M2 14.5c1-4 4-6 7-6 2 0 3 .5 4 1.5l-3 4.5z" fill="#4caf50"/><path d="M3.5 6a1.5 1 0 0 1 3 0 1.5 1 0 0 1 2 0.5h-5z" fill="#fff"/><path d="M9 15 15 9" stroke="#fff" stroke-width="1.6"/><path d="M15 9v6H9" fill="#dde7f5" stroke="none"/></svg><span class="t" style="left:1139px;top:648.5px;font-family:'Liberation Serif',serif;font-size:14px;color:#000">icone</span><div class="a btn" style="left:1139px;top:664px;width:41px;height:17px"><span class="t" style="left:6px;top:2px;font-size:11.6px">icone</span></div>
 <div class="a" style="left:1416px;top:509px;width:142px;height:75px;background:#e4eef8;border-radius:16px;box-shadow:5px 6px 6px #56606b"></div>
 <div class="a btn" style="left:1431px;top:523px;width:56px;height:18px"><span class="t" style="left:7px;top:3px;font-size:11.6px">Receive</span></div>
 <div class="a" style="left:1416px;top:604px;width:142px;height:76px;background:#e4eef8;border-radius:16px;box-shadow:5px 6px 6px #56606b"></div>
 <div class="a btn" style="left:1431px;top:619px;width:40px;height:17px"><span class="t" style="left:7px;top:2px;font-size:11.6px">Send</span></div>
 <span class="t" style="left:1288px;top:773.5px;font-size:19.8px;color:#a9b0b8">Activate Windows</span>
 <span class="t" style="left:1288px;top:798px;font-size:14.9px;color:#a9b0b8">Go to Settings to activate Windows.</span>
 <div class="a" style="left:1096px;top:836px;width:497px;height:10px;background:#f1f1f1"></div>
 <div class="a" style="left:1113px;top:839px;width:457px;height:7px;background:#c1c1c1"></div>
 <svg class="a" style="left:1100px;top:838px" width="8" height="8"><path d="M6 1 2 5l4 4z" fill="#a3a3a3"/></svg>
 <svg class="a" style="left:1583px;top:838px" width="8" height="8"><path d="M2 1l4 4-4 4z" fill="#505050"/></svg>
</div></div>
</body></html>
